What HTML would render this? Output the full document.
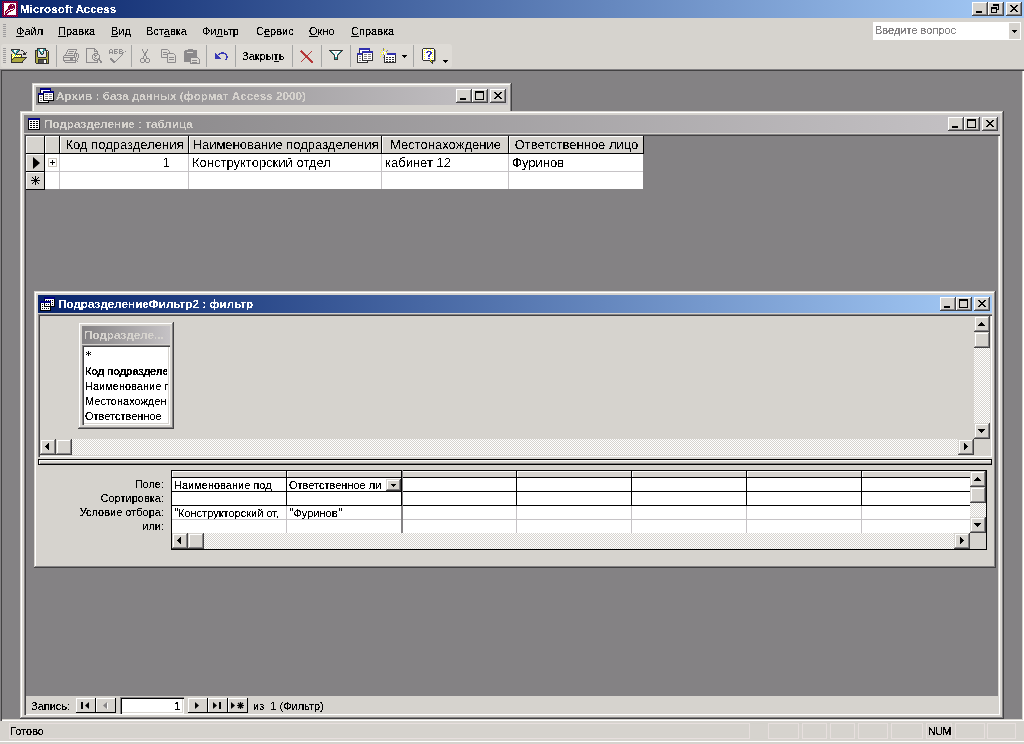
<!DOCTYPE html>
<html><head><meta charset="utf-8">
<style>
*{box-sizing:border-box}
body{margin:0;width:1024px;height:744px;position:relative;overflow:hidden;background:#D6D3CE;font-family:"Liberation Sans",sans-serif;font-size:11px;color:#000000}
.a{position:absolute}
.t{position:absolute;white-space:nowrap;line-height:12px;filter:url(#th)}
.dt{font-size:13px;line-height:15px;filter:url(#th5)}
u{text-decoration:underline;text-underline-offset:1px}
.frame{position:absolute;background:#D6D3CE;box-shadow:inset -1px -1px #424142,inset 1px 1px #D6D3CE,inset -2px -2px #848284,inset 2px 2px #FFFFFF}
.cb{position:absolute;width:16px;height:14px;background:#D6D3CE;box-shadow:inset -1px -1px #424142,inset 1px 1px #FFFFFF,inset -2px -2px #848284,inset 2px 2px #D6D3CE}
.sb{position:absolute;width:16px;height:16px;background:#D6D3CE;box-shadow:inset -1px -1px #424142,inset 1px 1px #D6D3CE,inset -2px -2px #848284,inset 2px 2px #FFFFFF}
.sunk{position:absolute;box-shadow:inset 1px 1px #848284,inset 2px 2px #424142,inset -1px -1px #FFFFFF,inset -2px -2px #D6D3CE}
.cap-act{position:absolute;height:18px;background:linear-gradient(to right,#08246B,#A5CBF7)}
.cap-in{position:absolute;height:18px;background:linear-gradient(to right,#848284,#C6C3C6)}
.capt{position:absolute;filter:url(#th5);font-weight:bold;font-size:11.7px;line-height:12px;white-space:nowrap}
.track{background-color:#FFFFFF;background-image:linear-gradient(45deg,#D6D3CE 25%,transparent 25%,transparent 75%,#D6D3CE 75%),linear-gradient(45deg,#D6D3CE 25%,transparent 25%,transparent 75%,#D6D3CE 75%);background-size:2px 2px;background-position:0 0,1px 1px}
svg{position:absolute;shape-rendering:crispEdges;overflow:visible}

</style></head><body>
<svg width="0" height="0" style="position:absolute"><filter id="th"><feComponentTransfer><feFuncA type="discrete" tableValues="0 0 0 0 1 1 1 1 1 1"/></feComponentTransfer></filter><filter id="th5"><feComponentTransfer><feFuncA type="discrete" tableValues="0 0 0 0 0 1 1 1 1 1"/></feComponentTransfer></filter></svg>
<div class="cap-act" style="left:0px;top:0px;width:1024px"></div>
<svg style="left:2px;top:1px" width="16" height="16"><rect x="0" y="0" width="1" height="1" fill="#840000"/><rect x="1" y="0" width="1" height="1" fill="#84007B"/><rect x="2" y="0" width="1" height="1" fill="#840000"/><rect x="3" y="0" width="1" height="1" fill="#84007B"/><rect x="4" y="0" width="1" height="1" fill="#840000"/><rect x="5" y="0" width="1" height="1" fill="#84007B"/><rect x="6" y="0" width="1" height="1" fill="#840000"/><rect x="7" y="0" width="1" height="1" fill="#84007B"/><rect x="8" y="0" width="1" height="1" fill="#840000"/><rect x="9" y="0" width="1" height="1" fill="#84007B"/><rect x="10" y="0" width="1" height="1" fill="#840000"/><rect x="11" y="0" width="1" height="1" fill="#84007B"/><rect x="12" y="0" width="1" height="1" fill="#840000"/><rect x="13" y="0" width="1" height="1" fill="#84007B"/><rect x="14" y="0" width="1" height="1" fill="#840000"/><rect x="15" y="0" width="1" height="1" fill="#84007B"/><rect x="0" y="1" width="1" height="1" fill="#84007B"/><rect x="1" y="1" width="1" height="1" fill="#840000"/><rect x="2" y="1" width="1" height="1" fill="#84007B"/><rect x="3" y="1" width="1" height="1" fill="#840000"/><rect x="4" y="1" width="1" height="1" fill="#84007B"/><rect x="5" y="1" width="1" height="1" fill="#840000"/><rect x="6" y="1" width="1" height="1" fill="#84007B"/><rect x="7" y="1" width="1" height="1" fill="#840000"/><rect x="8" y="1" width="1" height="1" fill="#84007B"/><rect x="9" y="1" width="1" height="1" fill="#840000"/><rect x="10" y="1" width="1" height="1" fill="#84007B"/><rect x="11" y="1" width="1" height="1" fill="#840000"/><rect x="12" y="1" width="1" height="1" fill="#84007B"/><rect x="13" y="1" width="1" height="1" fill="#840000"/><rect x="14" y="1" width="1" height="1" fill="#84007B"/><rect x="15" y="1" width="1" height="1" fill="#840000"/><rect x="0" y="2" width="1" height="1" fill="#840000"/><rect x="1" y="2" width="1" height="1" fill="#84007B"/><rect x="2" y="2" width="12" height="1" fill="#FFFFFF"/><rect x="14" y="2" width="1" height="1" fill="#840000"/><rect x="15" y="2" width="1" height="1" fill="#84007B"/><rect x="0" y="3" width="1" height="1" fill="#84007B"/><rect x="1" y="3" width="1" height="1" fill="#840000"/><rect x="2" y="3" width="6" height="1" fill="#FFFFFF"/><rect x="8" y="3" width="1" height="1" fill="#840000"/><rect x="9" y="3" width="1" height="1" fill="#84007B"/><rect x="10" y="3" width="1" height="1" fill="#840000"/><rect x="11" y="3" width="1" height="1" fill="#84007B"/><rect x="12" y="3" width="2" height="1" fill="#FFFFFF"/><rect x="14" y="3" width="1" height="1" fill="#84007B"/><rect x="15" y="3" width="1" height="1" fill="#840000"/><rect x="0" y="4" width="1" height="1" fill="#840000"/><rect x="1" y="4" width="1" height="1" fill="#84007B"/><rect x="2" y="4" width="5" height="1" fill="#FFFFFF"/><rect x="7" y="4" width="1" height="1" fill="#840000"/><rect x="8" y="4" width="1" height="1" fill="#84007B"/><rect x="9" y="4" width="1" height="1" fill="#840000"/><rect x="10" y="4" width="1" height="1" fill="#FFFFFF"/><rect x="11" y="4" width="1" height="1" fill="#840000"/><rect x="12" y="4" width="1" height="1" fill="#84007B"/><rect x="13" y="4" width="1" height="1" fill="#FFFFFF"/><rect x="14" y="4" width="1" height="1" fill="#840000"/><rect x="15" y="4" width="1" height="1" fill="#84007B"/><rect x="0" y="5" width="1" height="1" fill="#84007B"/><rect x="1" y="5" width="1" height="1" fill="#840000"/><rect x="2" y="5" width="4" height="1" fill="#FFFFFF"/><rect x="6" y="5" width="1" height="1" fill="#840000"/><rect x="7" y="5" width="1" height="1" fill="#84007B"/><rect x="8" y="5" width="1" height="1" fill="#840000"/><rect x="9" y="5" width="1" height="1" fill="#84007B"/><rect x="10" y="5" width="1" height="1" fill="#840000"/><rect x="11" y="5" width="1" height="1" fill="#84007B"/><rect x="12" y="5" width="1" height="1" fill="#840000"/><rect x="13" y="5" width="1" height="1" fill="#FFFFFF"/><rect x="14" y="5" width="1" height="1" fill="#84007B"/><rect x="15" y="5" width="1" height="1" fill="#840000"/><rect x="0" y="6" width="1" height="1" fill="#840000"/><rect x="1" y="6" width="1" height="1" fill="#84007B"/><rect x="2" y="6" width="4" height="1" fill="#FFFFFF"/><rect x="6" y="6" width="1" height="1" fill="#840000"/><rect x="7" y="6" width="1" height="1" fill="#84007B"/><rect x="8" y="6" width="1" height="1" fill="#840000"/><rect x="9" y="6" width="1" height="1" fill="#84007B"/><rect x="10" y="6" width="1" height="1" fill="#840000"/><rect x="11" y="6" width="1" height="1" fill="#84007B"/><rect x="12" y="6" width="1" height="1" fill="#840000"/><rect x="13" y="6" width="1" height="1" fill="#FFFFFF"/><rect x="14" y="6" width="1" height="1" fill="#840000"/><rect x="15" y="6" width="1" height="1" fill="#84007B"/><rect x="0" y="7" width="1" height="1" fill="#84007B"/><rect x="1" y="7" width="1" height="1" fill="#840000"/><rect x="2" y="7" width="4" height="1" fill="#FFFFFF"/><rect x="6" y="7" width="1" height="1" fill="#84007B"/><rect x="7" y="7" width="1" height="1" fill="#840000"/><rect x="8" y="7" width="1" height="1" fill="#84007B"/><rect x="9" y="7" width="1" height="1" fill="#840000"/><rect x="10" y="7" width="1" height="1" fill="#84007B"/><rect x="11" y="7" width="1" height="1" fill="#FFFFFF"/><rect x="12" y="7" width="1" height="1" fill="#84007B"/><rect x="13" y="7" width="1" height="1" fill="#FFFFFF"/><rect x="14" y="7" width="1" height="1" fill="#84007B"/><rect x="15" y="7" width="1" height="1" fill="#840000"/><rect x="0" y="8" width="1" height="1" fill="#840000"/><rect x="1" y="8" width="1" height="1" fill="#84007B"/><rect x="2" y="8" width="3" height="1" fill="#FFFFFF"/><rect x="5" y="8" width="1" height="1" fill="#840000"/><rect x="6" y="8" width="1" height="1" fill="#84007B"/><rect x="7" y="8" width="1" height="1" fill="#840000"/><rect x="8" y="8" width="3" height="1" fill="#FFFFFF"/><rect x="11" y="8" width="1" height="1" fill="#840000"/><rect x="12" y="8" width="2" height="1" fill="#FFFFFF"/><rect x="14" y="8" width="1" height="1" fill="#840000"/><rect x="15" y="8" width="1" height="1" fill="#84007B"/><rect x="0" y="9" width="1" height="1" fill="#84007B"/><rect x="1" y="9" width="1" height="1" fill="#840000"/><rect x="2" y="9" width="2" height="1" fill="#FFFFFF"/><rect x="4" y="9" width="1" height="1" fill="#840000"/><rect x="5" y="9" width="1" height="1" fill="#84007B"/><rect x="6" y="9" width="2" height="1" fill="#FFFFFF"/><rect x="8" y="9" width="1" height="1" fill="#840000"/><rect x="9" y="9" width="1" height="1" fill="#84007B"/><rect x="10" y="9" width="1" height="1" fill="#840000"/><rect x="11" y="9" width="3" height="1" fill="#FFFFFF"/><rect x="14" y="9" width="1" height="1" fill="#84007B"/><rect x="15" y="9" width="1" height="1" fill="#840000"/><rect x="0" y="10" width="1" height="1" fill="#840000"/><rect x="1" y="10" width="1" height="1" fill="#84007B"/><rect x="2" y="10" width="1" height="1" fill="#FFFFFF"/><rect x="3" y="10" width="1" height="1" fill="#840000"/><rect x="4" y="10" width="1" height="1" fill="#84007B"/><rect x="5" y="10" width="1" height="1" fill="#FFFFFF"/><rect x="6" y="10" width="1" height="1" fill="#840000"/><rect x="7" y="10" width="1" height="1" fill="#84007B"/><rect x="8" y="10" width="1" height="1" fill="#840000"/><rect x="9" y="10" width="5" height="1" fill="#FFFFFF"/><rect x="14" y="10" width="1" height="1" fill="#840000"/><rect x="15" y="10" width="1" height="1" fill="#84007B"/><rect x="0" y="11" width="1" height="1" fill="#84007B"/><rect x="1" y="11" width="1" height="1" fill="#840000"/><rect x="2" y="11" width="1" height="1" fill="#FFFFFF"/><rect x="3" y="11" width="1" height="1" fill="#840000"/><rect x="4" y="11" width="1" height="1" fill="#FFFFFF"/><rect x="5" y="11" width="1" height="1" fill="#840000"/><rect x="6" y="11" width="1" height="1" fill="#84007B"/><rect x="7" y="11" width="7" height="1" fill="#FFFFFF"/><rect x="14" y="11" width="1" height="1" fill="#84007B"/><rect x="15" y="11" width="1" height="1" fill="#840000"/><rect x="0" y="12" width="1" height="1" fill="#840000"/><rect x="1" y="12" width="1" height="1" fill="#84007B"/><rect x="2" y="12" width="1" height="1" fill="#FFFFFF"/><rect x="3" y="12" width="1" height="1" fill="#84007B"/><rect x="4" y="12" width="1" height="1" fill="#840000"/><rect x="5" y="12" width="1" height="1" fill="#84007B"/><rect x="6" y="12" width="8" height="1" fill="#FFFFFF"/><rect x="14" y="12" width="1" height="1" fill="#840000"/><rect x="15" y="12" width="1" height="1" fill="#84007B"/><rect x="0" y="13" width="1" height="1" fill="#84007B"/><rect x="1" y="13" width="1" height="1" fill="#840000"/><rect x="2" y="13" width="1" height="1" fill="#FFFFFF"/><rect x="3" y="13" width="1" height="1" fill="#840000"/><rect x="4" y="13" width="1" height="1" fill="#84007B"/><rect x="5" y="13" width="9" height="1" fill="#FFFFFF"/><rect x="14" y="13" width="1" height="1" fill="#84007B"/><rect x="15" y="13" width="1" height="1" fill="#840000"/><rect x="0" y="14" width="1" height="1" fill="#840000"/><rect x="1" y="14" width="1" height="1" fill="#84007B"/><rect x="2" y="14" width="1" height="1" fill="#840000"/><rect x="3" y="14" width="1" height="1" fill="#84007B"/><rect x="4" y="14" width="1" height="1" fill="#840000"/><rect x="5" y="14" width="1" height="1" fill="#84007B"/><rect x="6" y="14" width="1" height="1" fill="#840000"/><rect x="7" y="14" width="1" height="1" fill="#84007B"/><rect x="8" y="14" width="1" height="1" fill="#840000"/><rect x="9" y="14" width="1" height="1" fill="#84007B"/><rect x="10" y="14" width="1" height="1" fill="#840000"/><rect x="11" y="14" width="1" height="1" fill="#84007B"/><rect x="12" y="14" width="1" height="1" fill="#840000"/><rect x="13" y="14" width="1" height="1" fill="#84007B"/><rect x="14" y="14" width="1" height="1" fill="#840000"/><rect x="15" y="14" width="1" height="1" fill="#84007B"/><rect x="0" y="15" width="1" height="1" fill="#84007B"/><rect x="1" y="15" width="1" height="1" fill="#840000"/><rect x="2" y="15" width="1" height="1" fill="#84007B"/><rect x="3" y="15" width="1" height="1" fill="#840000"/><rect x="4" y="15" width="1" height="1" fill="#84007B"/><rect x="5" y="15" width="1" height="1" fill="#840000"/><rect x="6" y="15" width="1" height="1" fill="#84007B"/><rect x="7" y="15" width="1" height="1" fill="#840000"/><rect x="8" y="15" width="1" height="1" fill="#84007B"/><rect x="9" y="15" width="1" height="1" fill="#840000"/><rect x="10" y="15" width="1" height="1" fill="#84007B"/><rect x="11" y="15" width="1" height="1" fill="#840000"/><rect x="12" y="15" width="1" height="1" fill="#84007B"/><rect x="13" y="15" width="1" height="1" fill="#840000"/><rect x="14" y="15" width="1" height="1" fill="#84007B"/><rect x="15" y="15" width="1" height="1" fill="#840000"/></svg>
<div class="capt" style="left:20px;top:3px;color:#FFFFFF">Microsoft Access</div>
<div class="cb" style="left:972px;top:2px"><svg style="left:0;top:0" width="16" height="14"><rect x="4" y="9" width="6" height="2" fill="#000000"/></svg></div>
<div class="cb" style="left:988px;top:2px"><svg style="left:0;top:0" width="16" height="14"><rect x="5" y="2" width="6" height="2" fill="#000000"/><rect x="10" y="2" width="1" height="6" fill="#000000"/><rect x="9" y="7" width="2" height="1" fill="#000000"/><rect x="3" y="5" width="6" height="2" fill="#000000"/><rect x="3" y="5" width="1" height="6" fill="#000000"/><rect x="8" y="5" width="1" height="6" fill="#000000"/><rect x="3" y="10" width="6" height="1" fill="#000000"/></svg></div>
<div class="cb" style="left:1006px;top:2px"><svg style="left:0;top:0" width="16" height="14"><rect x="4" y="3" width="1" height="1" fill="#000000"/><rect x="5" y="3" width="1" height="1" fill="#000000"/><rect x="10" y="3" width="1" height="1" fill="#000000"/><rect x="11" y="3" width="1" height="1" fill="#000000"/><rect x="5" y="4" width="1" height="1" fill="#000000"/><rect x="6" y="4" width="1" height="1" fill="#000000"/><rect x="9" y="4" width="1" height="1" fill="#000000"/><rect x="10" y="4" width="1" height="1" fill="#000000"/><rect x="6" y="5" width="1" height="1" fill="#000000"/><rect x="7" y="5" width="1" height="1" fill="#000000"/><rect x="8" y="5" width="1" height="1" fill="#000000"/><rect x="9" y="5" width="1" height="1" fill="#000000"/><rect x="7" y="6" width="1" height="1" fill="#000000"/><rect x="8" y="6" width="1" height="1" fill="#000000"/><rect x="6" y="7" width="1" height="1" fill="#000000"/><rect x="7" y="7" width="1" height="1" fill="#000000"/><rect x="8" y="7" width="1" height="1" fill="#000000"/><rect x="9" y="7" width="1" height="1" fill="#000000"/><rect x="5" y="8" width="1" height="1" fill="#000000"/><rect x="6" y="8" width="1" height="1" fill="#000000"/><rect x="9" y="8" width="1" height="1" fill="#000000"/><rect x="10" y="8" width="1" height="1" fill="#000000"/><rect x="4" y="9" width="1" height="1" fill="#000000"/><rect x="5" y="9" width="1" height="1" fill="#000000"/><rect x="10" y="9" width="1" height="1" fill="#000000"/><rect x="11" y="9" width="1" height="1" fill="#000000"/></svg></div>
<div class="a" style="left:3px;top:24px;width:3px;height:1px;background:#9C9A9C;"></div>
<div class="a" style="left:3px;top:26px;width:3px;height:1px;background:#9C9A9C;"></div>
<div class="a" style="left:3px;top:28px;width:3px;height:1px;background:#9C9A9C;"></div>
<div class="a" style="left:3px;top:30px;width:3px;height:1px;background:#9C9A9C;"></div>
<div class="a" style="left:3px;top:32px;width:3px;height:1px;background:#9C9A9C;"></div>
<div class="a" style="left:3px;top:34px;width:3px;height:1px;background:#9C9A9C;"></div>
<div class="a" style="left:3px;top:36px;width:3px;height:1px;background:#9C9A9C;"></div>
<div class="t" style="left:16px;top:25px;"><u>Ф</u>айл</div>
<div class="t" style="left:58px;top:25px;"><u>П</u>равка</div>
<div class="t" style="left:111px;top:25px;"><u>В</u>ид</div>
<div class="t" style="left:146px;top:25px;">Вст<u>а</u>вка</div>
<div class="t" style="left:202px;top:25px;">Фи<u>л</u>ьтр</div>
<div class="t" style="left:256px;top:25px;">С<u>е</u>рвис</div>
<div class="t" style="left:309px;top:25px;"><u>О</u>кно</div>
<div class="t" style="left:351px;top:25px;"><u>С</u>правка</div>
<div class="a" style="left:873px;top:22px;width:148px;height:18px;background:#FFFFFF;"></div>
<div class="t" style="left:875px;top:24px;color:#848284">Введите вопрос</div>
<div class="a" style="left:1009px;top:23px;width:11px;height:16px;background:#D6D3CE;"></div>
<svg style="left:1012px;top:30px" width="5" height="3"><rect x="0" y="0" width="5" height="1" fill="#000000"/><rect x="1" y="1" width="3" height="1" fill="#000000"/><rect x="2" y="2" width="1" height="1" fill="#000000"/></svg>
<div class="a" style="left:1px;top:44px;width:451px;height:24px;background:#DEDBD6;border-radius:3px"></div>
<div class="a" style="left:3px;top:48px;width:3px;height:1px;background:#9C9A9C;"></div>
<div class="a" style="left:3px;top:50px;width:3px;height:1px;background:#9C9A9C;"></div>
<div class="a" style="left:3px;top:52px;width:3px;height:1px;background:#9C9A9C;"></div>
<div class="a" style="left:3px;top:54px;width:3px;height:1px;background:#9C9A9C;"></div>
<div class="a" style="left:3px;top:56px;width:3px;height:1px;background:#9C9A9C;"></div>
<div class="a" style="left:3px;top:58px;width:3px;height:1px;background:#9C9A9C;"></div>
<div class="a" style="left:3px;top:60px;width:3px;height:1px;background:#9C9A9C;"></div>
<div class="a" style="left:3px;top:62px;width:3px;height:1px;background:#9C9A9C;"></div>
<div class="a" style="left:56px;top:45px;width:1px;height:22px;background:#A5A6A5;"></div>
<div class="a" style="left:131px;top:45px;width:1px;height:22px;background:#A5A6A5;"></div>
<div class="a" style="left:206px;top:45px;width:1px;height:22px;background:#A5A6A5;"></div>
<div class="a" style="left:235px;top:45px;width:1px;height:22px;background:#A5A6A5;"></div>
<div class="a" style="left:292px;top:45px;width:1px;height:22px;background:#A5A6A5;"></div>
<div class="a" style="left:321px;top:45px;width:1px;height:22px;background:#A5A6A5;"></div>
<div class="a" style="left:350px;top:45px;width:1px;height:22px;background:#A5A6A5;"></div>
<div class="a" style="left:413px;top:45px;width:1px;height:22px;background:#A5A6A5;"></div>
<svg style="left:10px;top:47px" width="18" height="16"><rect x="1" y="2" width="9" height="1" fill="#313031"/><rect x="1" y="3" width="1" height="1" fill="#313031"/><rect x="2" y="3" width="2" height="1" fill="#31A2A5"/><rect x="4" y="3" width="3" height="1" fill="#FFFFFF"/><rect x="7" y="3" width="2" height="1" fill="#31A2A5"/><rect x="9" y="3" width="1" height="1" fill="#313031"/><rect x="11" y="3" width="2" height="1" fill="#313031"/><rect x="2" y="4" width="1" height="1" fill="#313031"/><rect x="3" y="4" width="1" height="1" fill="#31A2A5"/><rect x="4" y="4" width="2" height="1" fill="#FFFFFF"/><rect x="6" y="4" width="2" height="1" fill="#31A2A5"/><rect x="8" y="4" width="1" height="1" fill="#313031"/><rect x="13" y="4" width="1" height="1" fill="#313031"/><rect x="3" y="5" width="1" height="1" fill="#313031"/><rect x="4" y="5" width="1" height="1" fill="#31A2A5"/><rect x="5" y="5" width="1" height="1" fill="#FFFFFF"/><rect x="6" y="5" width="1" height="1" fill="#31A2A5"/><rect x="7" y="5" width="1" height="1" fill="#313031"/><rect x="14" y="5" width="1" height="1" fill="#313031"/><rect x="16" y="5" width="1" height="1" fill="#313031"/><rect x="4" y="6" width="1" height="1" fill="#313031"/><rect x="5" y="6" width="1" height="1" fill="#31A2A5"/><rect x="6" y="6" width="1" height="1" fill="#313031"/><rect x="13" y="6" width="3" height="1" fill="#313031"/><rect x="1" y="7" width="1" height="1" fill="#313031"/><rect x="2" y="7" width="1" height="1" fill="#FFFF00"/><rect x="3" y="7" width="1" height="1" fill="#FFFFFF"/><rect x="4" y="7" width="1" height="1" fill="#FFFF00"/><rect x="5" y="7" width="1" height="1" fill="#31A2A5"/><rect x="6" y="7" width="6" height="1" fill="#313031"/><rect x="13" y="7" width="3" height="1" fill="#313031"/><rect x="1" y="8" width="1" height="1" fill="#313031"/><rect x="2" y="8" width="1" height="1" fill="#FFFFFF"/><rect x="3" y="8" width="1" height="1" fill="#FFFF00"/><rect x="4" y="8" width="1" height="1" fill="#FFFFFF"/><rect x="5" y="8" width="1" height="1" fill="#31A2A5"/><rect x="6" y="8" width="1" height="1" fill="#FFFFFF"/><rect x="7" y="8" width="1" height="1" fill="#FFFF00"/><rect x="8" y="8" width="1" height="1" fill="#FFFFFF"/><rect x="9" y="8" width="1" height="1" fill="#FFFF00"/><rect x="10" y="8" width="1" height="1" fill="#FFFFFF"/><rect x="11" y="8" width="1" height="1" fill="#313031"/><rect x="1" y="9" width="1" height="1" fill="#313031"/><rect x="2" y="9" width="1" height="1" fill="#FFFF00"/><rect x="3" y="9" width="1" height="1" fill="#FFFFFF"/><rect x="4" y="9" width="1" height="1" fill="#FFFF00"/><rect x="5" y="9" width="1" height="1" fill="#FFFFFF"/><rect x="6" y="9" width="1" height="1" fill="#FFFF00"/><rect x="7" y="9" width="1" height="1" fill="#FFFFFF"/><rect x="8" y="9" width="1" height="1" fill="#FFFF00"/><rect x="9" y="9" width="1" height="1" fill="#FFFFFF"/><rect x="10" y="9" width="1" height="1" fill="#FFFF00"/><rect x="11" y="9" width="1" height="1" fill="#313031"/><rect x="1" y="10" width="1" height="1" fill="#313031"/><rect x="2" y="10" width="1" height="1" fill="#FFFFFF"/><rect x="3" y="10" width="1" height="1" fill="#FFFF00"/><rect x="4" y="10" width="13" height="1" fill="#313031"/><rect x="1" y="11" width="1" height="1" fill="#313031"/><rect x="2" y="11" width="1" height="1" fill="#FFFF00"/><rect x="3" y="11" width="1" height="1" fill="#313031"/><rect x="4" y="11" width="11" height="1" fill="#ADAA42"/><rect x="15" y="11" width="1" height="1" fill="#313031"/><rect x="1" y="12" width="2" height="1" fill="#313031"/><rect x="3" y="12" width="11" height="1" fill="#ADAA42"/><rect x="14" y="12" width="1" height="1" fill="#313031"/><rect x="1" y="13" width="1" height="1" fill="#313031"/><rect x="2" y="13" width="11" height="1" fill="#ADAA42"/><rect x="13" y="13" width="1" height="1" fill="#313031"/><rect x="1" y="14" width="1" height="1" fill="#313031"/><rect x="2" y="14" width="10" height="1" fill="#ADAA42"/><rect x="12" y="14" width="1" height="1" fill="#313031"/><rect x="1" y="15" width="12" height="1" fill="#313031"/></svg>
<svg style="left:33px;top:47px" width="16" height="17"><rect x="4" y="1" width="9" height="1" fill="#313031"/><rect x="4" y="2" width="1" height="1" fill="#313031"/><rect x="5" y="2" width="2" height="1" fill="#31A2A5"/><rect x="7" y="2" width="3" height="1" fill="#FFFFFF"/><rect x="10" y="2" width="2" height="1" fill="#31A2A5"/><rect x="12" y="2" width="1" height="1" fill="#313031"/><rect x="2" y="3" width="3" height="1" fill="#313031"/><rect x="5" y="3" width="2" height="1" fill="#31A2A5"/><rect x="7" y="3" width="3" height="1" fill="#FFFFFF"/><rect x="10" y="3" width="2" height="1" fill="#31A2A5"/><rect x="12" y="3" width="3" height="1" fill="#313031"/><rect x="2" y="4" width="1" height="1" fill="#313031"/><rect x="3" y="4" width="1" height="1" fill="#ADAA42"/><rect x="4" y="4" width="1" height="1" fill="#313031"/><rect x="5" y="4" width="1" height="1" fill="#E7E3E7"/><rect x="6" y="4" width="1" height="1" fill="#313031"/><rect x="7" y="4" width="1" height="1" fill="#31A2A5"/><rect x="8" y="4" width="1" height="1" fill="#FFFFFF"/><rect x="9" y="4" width="1" height="1" fill="#31A2A5"/><rect x="10" y="4" width="1" height="1" fill="#313031"/><rect x="11" y="4" width="2" height="1" fill="#E7E3E7"/><rect x="13" y="4" width="1" height="1" fill="#313031"/><rect x="14" y="4" width="1" height="1" fill="#FFFFFF"/><rect x="15" y="4" width="1" height="1" fill="#313031"/><rect x="2" y="5" width="1" height="1" fill="#313031"/><rect x="3" y="5" width="1" height="1" fill="#ADAA42"/><rect x="4" y="5" width="1" height="1" fill="#313031"/><rect x="5" y="5" width="2" height="1" fill="#E7E3E7"/><rect x="7" y="5" width="1" height="1" fill="#313031"/><rect x="8" y="5" width="1" height="1" fill="#31A2A5"/><rect x="9" y="5" width="1" height="1" fill="#FFFFFF"/><rect x="10" y="5" width="1" height="1" fill="#313031"/><rect x="11" y="5" width="2" height="1" fill="#E7E3E7"/><rect x="13" y="5" width="1" height="1" fill="#313031"/><rect x="14" y="5" width="1" height="1" fill="#ADAA42"/><rect x="15" y="5" width="1" height="1" fill="#313031"/><rect x="2" y="6" width="1" height="1" fill="#313031"/><rect x="3" y="6" width="1" height="1" fill="#ADAA42"/><rect x="4" y="6" width="1" height="1" fill="#313031"/><rect x="5" y="6" width="2" height="1" fill="#E7E3E7"/><rect x="7" y="6" width="1" height="1" fill="#313031"/><rect x="8" y="6" width="2" height="1" fill="#31A2A5"/><rect x="10" y="6" width="1" height="1" fill="#313031"/><rect x="11" y="6" width="2" height="1" fill="#E7E3E7"/><rect x="13" y="6" width="1" height="1" fill="#313031"/><rect x="14" y="6" width="1" height="1" fill="#ADAA42"/><rect x="15" y="6" width="1" height="1" fill="#313031"/><rect x="2" y="7" width="1" height="1" fill="#313031"/><rect x="3" y="7" width="1" height="1" fill="#ADAA42"/><rect x="4" y="7" width="1" height="1" fill="#313031"/><rect x="5" y="7" width="3" height="1" fill="#E7E3E7"/><rect x="8" y="7" width="2" height="1" fill="#313031"/><rect x="10" y="7" width="3" height="1" fill="#E7E3E7"/><rect x="13" y="7" width="1" height="1" fill="#313031"/><rect x="14" y="7" width="1" height="1" fill="#ADAA42"/><rect x="15" y="7" width="1" height="1" fill="#313031"/><rect x="2" y="8" width="1" height="1" fill="#313031"/><rect x="3" y="8" width="1" height="1" fill="#ADAA42"/><rect x="4" y="8" width="1" height="1" fill="#313031"/><rect x="5" y="8" width="8" height="1" fill="#E7E3E7"/><rect x="13" y="8" width="1" height="1" fill="#313031"/><rect x="14" y="8" width="1" height="1" fill="#ADAA42"/><rect x="15" y="8" width="1" height="1" fill="#313031"/><rect x="2" y="9" width="1" height="1" fill="#313031"/><rect x="3" y="9" width="1" height="1" fill="#ADAA42"/><rect x="4" y="9" width="1" height="1" fill="#313031"/><rect x="5" y="9" width="8" height="1" fill="#E7E3E7"/><rect x="13" y="9" width="1" height="1" fill="#313031"/><rect x="14" y="9" width="1" height="1" fill="#ADAA42"/><rect x="15" y="9" width="1" height="1" fill="#313031"/><rect x="2" y="10" width="1" height="1" fill="#313031"/><rect x="3" y="10" width="2" height="1" fill="#ADAA42"/><rect x="5" y="10" width="8" height="1" fill="#313031"/><rect x="13" y="10" width="2" height="1" fill="#ADAA42"/><rect x="15" y="10" width="1" height="1" fill="#313031"/><rect x="2" y="11" width="1" height="1" fill="#313031"/><rect x="3" y="11" width="12" height="1" fill="#ADAA42"/><rect x="15" y="11" width="1" height="1" fill="#313031"/><rect x="2" y="12" width="1" height="1" fill="#313031"/><rect x="3" y="12" width="2" height="1" fill="#ADAA42"/><rect x="5" y="12" width="9" height="1" fill="#313031"/><rect x="14" y="12" width="1" height="1" fill="#ADAA42"/><rect x="15" y="12" width="1" height="1" fill="#313031"/><rect x="2" y="13" width="1" height="1" fill="#313031"/><rect x="3" y="13" width="2" height="1" fill="#ADAA42"/><rect x="5" y="13" width="1" height="1" fill="#313031"/><rect x="6" y="13" width="5" height="1" fill="#525152"/><rect x="11" y="13" width="2" height="1" fill="#FFFFFF"/><rect x="13" y="13" width="1" height="1" fill="#313031"/><rect x="14" y="13" width="1" height="1" fill="#ADAA42"/><rect x="15" y="13" width="1" height="1" fill="#313031"/><rect x="2" y="14" width="1" height="1" fill="#313031"/><rect x="3" y="14" width="2" height="1" fill="#ADAA42"/><rect x="5" y="14" width="1" height="1" fill="#313031"/><rect x="6" y="14" width="5" height="1" fill="#525152"/><rect x="11" y="14" width="2" height="1" fill="#FFFFFF"/><rect x="13" y="14" width="1" height="1" fill="#313031"/><rect x="14" y="14" width="1" height="1" fill="#ADAA42"/><rect x="15" y="14" width="1" height="1" fill="#313031"/><rect x="2" y="15" width="1" height="1" fill="#313031"/><rect x="3" y="15" width="2" height="1" fill="#ADAA42"/><rect x="5" y="15" width="1" height="1" fill="#313031"/><rect x="6" y="15" width="5" height="1" fill="#525152"/><rect x="11" y="15" width="2" height="1" fill="#FFFFFF"/><rect x="13" y="15" width="1" height="1" fill="#313031"/><rect x="14" y="15" width="1" height="1" fill="#ADAA42"/><rect x="15" y="15" width="1" height="1" fill="#313031"/><rect x="3" y="16" width="13" height="1" fill="#313031"/></svg>
<svg style="left:62px;top:47px" width="18" height="16"><rect x="6" y="2" width="9" height="1" fill="#8C8A8C"/><rect x="5" y="3" width="1" height="1" fill="#8C8A8C"/><rect x="14" y="3" width="1" height="1" fill="#8C8A8C"/><rect x="5" y="4" width="1" height="1" fill="#8C8A8C"/><rect x="7" y="4" width="5" height="1" fill="#8C8A8C"/><rect x="13" y="4" width="1" height="1" fill="#8C8A8C"/><rect x="4" y="5" width="1" height="1" fill="#8C8A8C"/><rect x="13" y="5" width="1" height="1" fill="#8C8A8C"/><rect x="4" y="6" width="1" height="1" fill="#8C8A8C"/><rect x="6" y="6" width="5" height="1" fill="#8C8A8C"/><rect x="12" y="6" width="4" height="1" fill="#8C8A8C"/><rect x="3" y="7" width="1" height="1" fill="#8C8A8C"/><rect x="12" y="7" width="1" height="1" fill="#8C8A8C"/><rect x="14" y="7" width="1" height="1" fill="#8C8A8C"/><rect x="16" y="7" width="1" height="1" fill="#8C8A8C"/><rect x="2" y="8" width="11" height="1" fill="#8C8A8C"/><rect x="14" y="8" width="1" height="1" fill="#8C8A8C"/><rect x="16" y="8" width="1" height="1" fill="#8C8A8C"/><rect x="1" y="9" width="1" height="1" fill="#8C8A8C"/><rect x="12" y="9" width="1" height="1" fill="#8C8A8C"/><rect x="14" y="9" width="1" height="1" fill="#8C8A8C"/><rect x="16" y="9" width="1" height="1" fill="#8C8A8C"/><rect x="1" y="10" width="13" height="1" fill="#8C8A8C"/><rect x="16" y="10" width="1" height="1" fill="#8C8A8C"/><rect x="1" y="11" width="1" height="1" fill="#8C8A8C"/><rect x="8" y="11" width="3" height="1" fill="#8C8A8C"/><rect x="13" y="11" width="1" height="1" fill="#8C8A8C"/><rect x="15" y="11" width="1" height="1" fill="#8C8A8C"/><rect x="1" y="12" width="1" height="1" fill="#8C8A8C"/><rect x="8" y="12" width="3" height="1" fill="#8C8A8C"/><rect x="13" y="12" width="1" height="1" fill="#8C8A8C"/><rect x="15" y="12" width="1" height="1" fill="#8C8A8C"/><rect x="1" y="13" width="14" height="1" fill="#8C8A8C"/><rect x="2" y="14" width="1" height="1" fill="#8C8A8C"/><rect x="13" y="14" width="1" height="1" fill="#8C8A8C"/><rect x="15" y="14" width="1" height="1" fill="#8C8A8C"/><rect x="3" y="15" width="11" height="1" fill="#8C8A8C"/></svg>
<svg style="left:85px;top:47px" width="18" height="16"><rect x="1" y="1" width="9" height="1" fill="#8C8A8C"/><rect x="1" y="2" width="1" height="1" fill="#8C8A8C"/><rect x="9" y="2" width="2" height="1" fill="#8C8A8C"/><rect x="1" y="3" width="1" height="1" fill="#8C8A8C"/><rect x="9" y="3" width="1" height="1" fill="#8C8A8C"/><rect x="11" y="3" width="1" height="1" fill="#8C8A8C"/><rect x="1" y="4" width="1" height="1" fill="#8C8A8C"/><rect x="9" y="4" width="4" height="1" fill="#8C8A8C"/><rect x="1" y="5" width="1" height="1" fill="#8C8A8C"/><rect x="12" y="5" width="1" height="1" fill="#8C8A8C"/><rect x="1" y="6" width="1" height="1" fill="#8C8A8C"/><rect x="9" y="6" width="4" height="1" fill="#8C8A8C"/><rect x="1" y="7" width="1" height="1" fill="#8C8A8C"/><rect x="8" y="7" width="2" height="1" fill="#8C8A8C"/><rect x="12" y="7" width="2" height="1" fill="#8C8A8C"/><rect x="1" y="8" width="1" height="1" fill="#8C8A8C"/><rect x="7" y="8" width="1" height="1" fill="#8C8A8C"/><rect x="9" y="8" width="3" height="1" fill="#8C8A8C"/><rect x="14" y="8" width="1" height="1" fill="#8C8A8C"/><rect x="1" y="9" width="1" height="1" fill="#8C8A8C"/><rect x="7" y="9" width="1" height="1" fill="#8C8A8C"/><rect x="10" y="9" width="1" height="1" fill="#8C8A8C"/><rect x="14" y="9" width="1" height="1" fill="#8C8A8C"/><rect x="1" y="10" width="1" height="1" fill="#8C8A8C"/><rect x="7" y="10" width="1" height="1" fill="#8C8A8C"/><rect x="9" y="10" width="1" height="1" fill="#8C8A8C"/><rect x="14" y="10" width="1" height="1" fill="#8C8A8C"/><rect x="1" y="11" width="1" height="1" fill="#8C8A8C"/><rect x="7" y="11" width="1" height="1" fill="#8C8A8C"/><rect x="10" y="11" width="2" height="1" fill="#8C8A8C"/><rect x="13" y="11" width="2" height="1" fill="#8C8A8C"/><rect x="1" y="12" width="1" height="1" fill="#8C8A8C"/><rect x="8" y="12" width="2" height="1" fill="#8C8A8C"/><rect x="12" y="12" width="3" height="1" fill="#8C8A8C"/><rect x="1" y="13" width="1" height="1" fill="#8C8A8C"/><rect x="9" y="13" width="4" height="1" fill="#8C8A8C"/><rect x="14" y="13" width="2" height="1" fill="#8C8A8C"/><rect x="1" y="14" width="1" height="1" fill="#8C8A8C"/><rect x="12" y="14" width="1" height="1" fill="#8C8A8C"/><rect x="15" y="14" width="2" height="1" fill="#8C8A8C"/><rect x="1" y="15" width="12" height="1" fill="#8C8A8C"/><rect x="15" y="15" width="2" height="1" fill="#8C8A8C"/></svg>
<svg style="left:108px;top:47px" width="18" height="16"><rect x="2" y="2" width="2" height="1" fill="#8C8A8C"/><rect x="6" y="2" width="4" height="1" fill="#8C8A8C"/><rect x="11" y="2" width="3" height="1" fill="#8C8A8C"/><rect x="1" y="3" width="1" height="1" fill="#8C8A8C"/><rect x="4" y="3" width="1" height="1" fill="#8C8A8C"/><rect x="6" y="3" width="1" height="1" fill="#8C8A8C"/><rect x="11" y="3" width="1" height="1" fill="#8C8A8C"/><rect x="14" y="3" width="1" height="1" fill="#8C8A8C"/><rect x="1" y="4" width="1" height="1" fill="#8C8A8C"/><rect x="4" y="4" width="1" height="1" fill="#8C8A8C"/><rect x="6" y="4" width="3" height="1" fill="#8C8A8C"/><rect x="11" y="4" width="3" height="1" fill="#8C8A8C"/><rect x="17" y="4" width="1" height="1" fill="#8C8A8C"/><rect x="1" y="5" width="4" height="1" fill="#8C8A8C"/><rect x="6" y="5" width="1" height="1" fill="#8C8A8C"/><rect x="9" y="5" width="1" height="1" fill="#8C8A8C"/><rect x="11" y="5" width="1" height="1" fill="#8C8A8C"/><rect x="14" y="5" width="2" height="1" fill="#8C8A8C"/><rect x="1" y="6" width="1" height="1" fill="#8C8A8C"/><rect x="4" y="6" width="1" height="1" fill="#8C8A8C"/><rect x="6" y="6" width="3" height="1" fill="#8C8A8C"/><rect x="11" y="6" width="4" height="1" fill="#8C8A8C"/><rect x="14" y="7" width="1" height="1" fill="#8C8A8C"/><rect x="13" y="8" width="1" height="1" fill="#8C8A8C"/><rect x="12" y="9" width="1" height="1" fill="#8C8A8C"/><rect x="11" y="10" width="1" height="1" fill="#8C8A8C"/><rect x="2" y="11" width="2" height="1" fill="#8C8A8C"/><rect x="10" y="11" width="1" height="1" fill="#8C8A8C"/><rect x="2" y="12" width="3" height="1" fill="#8C8A8C"/><rect x="9" y="12" width="1" height="1" fill="#8C8A8C"/><rect x="3" y="13" width="3" height="1" fill="#8C8A8C"/><rect x="8" y="13" width="1" height="1" fill="#8C8A8C"/><rect x="4" y="14" width="4" height="1" fill="#8C8A8C"/><rect x="5" y="15" width="2" height="1" fill="#8C8A8C"/></svg>
<svg style="left:140px;top:49px" width="11" height="15" shape-rendering="auto"><path d="M2 0l5 9 M8 0l-5 9" stroke="#8C8A8C" fill="none"/><ellipse cx="2.5" cy="11.5" rx="1.8" ry="2.2" fill="none" stroke="#8C8A8C"/><ellipse cx="7.5" cy="11.5" rx="1.8" ry="2.2" fill="none" stroke="#8C8A8C"/></svg>
<svg style="left:161px;top:49px" width="16" height="14"><path d="M0.5 0.5h6l2 2v6h-8z" fill="none" stroke="#8C8A8C" shape-rendering="auto"/><rect x="2" y="3" width="4" height="1" fill="#8C8A8C"/><rect x="2" y="5" width="4" height="1" fill="#8C8A8C"/><path d="M6.5 4.5h6l2 2v7h-8z" fill="#DEDBD6" stroke="#8C8A8C" shape-rendering="auto"/><rect x="8" y="8" width="5" height="1" fill="#8C8A8C"/><rect x="8" y="10" width="5" height="1" fill="#8C8A8C"/></svg>
<svg style="left:184px;top:49px" width="17" height="15" shape-rendering="auto"><rect x="0" y="1" width="13" height="12" rx="2" fill="#8C8A8C"/><rect x="4" y="0" width="5" height="2" fill="#8C8A8C"/><rect x="3" y="3" width="6" height="1" fill="#DEDBD6"/><path d="M6.5 8.5h7l2 2v4h-9z" fill="#DEDBD6" stroke="#8C8A8C"/><path d="M8 11h5 M8 13h5" stroke="#8C8A8C"/></svg>
<svg style="left:214px;top:51px" width="15" height="10" shape-rendering="auto"><path d="M4 4 C6 1.5 11 1 12.5 4 C13.5 6 12.5 8 11 9" fill="none" stroke="#3938B5" stroke-width="1.4"/><path d="M1 2v6h6z" fill="#3938B5"/></svg>
<div class="t" style="left:242px;top:50px;">Закры<u>т</u>ь</div>
<svg style="left:300px;top:50px" width="15" height="14" shape-rendering="auto"><path d="M1 1l12 12" stroke="#B53839" stroke-width="1.8"/><path d="M12 1l-11 11" stroke="#B53839" stroke-width="1.3"/></svg>
<svg style="left:329px;top:50px" width="14" height="10"><rect x="0" y="0" width="14" height="1" fill="#313031"/><rect x="1" y="1" width="1" height="1" fill="#313031"/><rect x="2" y="1" width="1" height="1" fill="#31A2A5"/><rect x="3" y="1" width="8" height="1" fill="#FFFFFF"/><rect x="11" y="1" width="1" height="1" fill="#31A2A5"/><rect x="12" y="1" width="1" height="1" fill="#313031"/><rect x="2" y="2" width="1" height="1" fill="#313031"/><rect x="3" y="2" width="1" height="1" fill="#31A2A5"/><rect x="4" y="2" width="2" height="1" fill="#FFFFFF"/><rect x="6" y="2" width="2" height="1" fill="#DED3DE"/><rect x="8" y="2" width="2" height="1" fill="#FFFFFF"/><rect x="10" y="2" width="1" height="1" fill="#31A2A5"/><rect x="11" y="2" width="1" height="1" fill="#313031"/><rect x="3" y="3" width="1" height="1" fill="#313031"/><rect x="4" y="3" width="1" height="1" fill="#31A2A5"/><rect x="5" y="3" width="1" height="1" fill="#FFFFFF"/><rect x="6" y="3" width="2" height="1" fill="#DED3DE"/><rect x="8" y="3" width="1" height="1" fill="#FFFFFF"/><rect x="9" y="3" width="1" height="1" fill="#31A2A5"/><rect x="10" y="3" width="1" height="1" fill="#313031"/><rect x="4" y="4" width="1" height="1" fill="#313031"/><rect x="5" y="4" width="1" height="1" fill="#31A2A5"/><rect x="6" y="4" width="2" height="1" fill="#FFFFFF"/><rect x="8" y="4" width="1" height="1" fill="#31A2A5"/><rect x="9" y="4" width="1" height="1" fill="#313031"/><rect x="5" y="5" width="1" height="1" fill="#313031"/><rect x="6" y="5" width="2" height="1" fill="#FFFFFF"/><rect x="8" y="5" width="1" height="1" fill="#313031"/><rect x="5" y="6" width="1" height="1" fill="#313031"/><rect x="6" y="6" width="2" height="1" fill="#FFFFFF"/><rect x="8" y="6" width="1" height="1" fill="#313031"/><rect x="5" y="7" width="1" height="1" fill="#313031"/><rect x="6" y="7" width="2" height="1" fill="#31A2A5"/><rect x="8" y="7" width="1" height="1" fill="#313031"/><rect x="5" y="8" width="1" height="1" fill="#313031"/><rect x="6" y="8" width="2" height="1" fill="#31A2A5"/><rect x="8" y="8" width="1" height="1" fill="#313031"/><rect x="5" y="9" width="4" height="1" fill="#313031"/></svg>
<svg style="left:356px;top:47px" width="18" height="16"><rect x="3" y="1" width="11" height="1" fill="#3130AD"/><rect x="3" y="2" width="11" height="1" fill="#3130AD"/><rect x="3" y="3" width="1" height="1" fill="#313031"/><rect x="4" y="3" width="9" height="1" fill="#FFFFFF"/><rect x="13" y="3" width="1" height="1" fill="#313031"/><rect x="3" y="4" width="1" height="1" fill="#313031"/><rect x="4" y="4" width="2" height="1" fill="#FFFFFF"/><rect x="6" y="4" width="11" height="1" fill="#3130AD"/><rect x="3" y="5" width="1" height="1" fill="#313031"/><rect x="4" y="5" width="2" height="1" fill="#FFFFFF"/><rect x="6" y="5" width="11" height="1" fill="#3130AD"/><rect x="1" y="6" width="5" height="1" fill="#3130AD"/><rect x="6" y="6" width="1" height="1" fill="#313031"/><rect x="7" y="6" width="9" height="1" fill="#FFFFFF"/><rect x="16" y="6" width="1" height="1" fill="#313031"/><rect x="1" y="7" width="5" height="1" fill="#3130AD"/><rect x="6" y="7" width="1" height="1" fill="#313031"/><rect x="7" y="7" width="1" height="1" fill="#FFFFFF"/><rect x="8" y="7" width="3" height="1" fill="#848284"/><rect x="11" y="7" width="1" height="1" fill="#FFFFFF"/><rect x="12" y="7" width="3" height="1" fill="#848284"/><rect x="15" y="7" width="1" height="1" fill="#FFFFFF"/><rect x="16" y="7" width="1" height="1" fill="#313031"/><rect x="1" y="8" width="1" height="1" fill="#313031"/><rect x="2" y="8" width="4" height="1" fill="#FFFFFF"/><rect x="6" y="8" width="1" height="1" fill="#313031"/><rect x="7" y="8" width="9" height="1" fill="#FFFFFF"/><rect x="16" y="8" width="1" height="1" fill="#313031"/><rect x="1" y="9" width="1" height="1" fill="#313031"/><rect x="2" y="9" width="1" height="1" fill="#FFFFFF"/><rect x="3" y="9" width="2" height="1" fill="#848284"/><rect x="5" y="9" width="1" height="1" fill="#FFFFFF"/><rect x="6" y="9" width="1" height="1" fill="#313031"/><rect x="7" y="9" width="1" height="1" fill="#FFFFFF"/><rect x="8" y="9" width="3" height="1" fill="#848284"/><rect x="11" y="9" width="1" height="1" fill="#FFFFFF"/><rect x="12" y="9" width="3" height="1" fill="#848284"/><rect x="15" y="9" width="1" height="1" fill="#FFFFFF"/><rect x="16" y="9" width="1" height="1" fill="#313031"/><rect x="1" y="10" width="1" height="1" fill="#313031"/><rect x="2" y="10" width="4" height="1" fill="#FFFFFF"/><rect x="6" y="10" width="1" height="1" fill="#313031"/><rect x="7" y="10" width="9" height="1" fill="#FFFFFF"/><rect x="16" y="10" width="1" height="1" fill="#313031"/><rect x="1" y="11" width="1" height="1" fill="#313031"/><rect x="2" y="11" width="1" height="1" fill="#FFFFFF"/><rect x="3" y="11" width="2" height="1" fill="#848284"/><rect x="5" y="11" width="1" height="1" fill="#FFFFFF"/><rect x="6" y="11" width="1" height="1" fill="#313031"/><rect x="7" y="11" width="1" height="1" fill="#FFFFFF"/><rect x="8" y="11" width="3" height="1" fill="#848284"/><rect x="11" y="11" width="1" height="1" fill="#FFFFFF"/><rect x="12" y="11" width="3" height="1" fill="#848284"/><rect x="15" y="11" width="1" height="1" fill="#FFFFFF"/><rect x="16" y="11" width="1" height="1" fill="#313031"/><rect x="1" y="12" width="1" height="1" fill="#313031"/><rect x="2" y="12" width="4" height="1" fill="#FFFFFF"/><rect x="6" y="12" width="1" height="1" fill="#313031"/><rect x="7" y="12" width="9" height="1" fill="#FFFFFF"/><rect x="16" y="12" width="1" height="1" fill="#313031"/><rect x="1" y="13" width="1" height="1" fill="#313031"/><rect x="2" y="13" width="1" height="1" fill="#FFFFFF"/><rect x="3" y="13" width="2" height="1" fill="#848284"/><rect x="5" y="13" width="1" height="1" fill="#FFFFFF"/><rect x="6" y="13" width="11" height="1" fill="#313031"/><rect x="1" y="14" width="1" height="1" fill="#313031"/><rect x="2" y="14" width="9" height="1" fill="#FFFFFF"/><rect x="11" y="14" width="1" height="1" fill="#313031"/><rect x="1" y="15" width="11" height="1" fill="#313031"/></svg>
<svg style="left:379px;top:47px" width="17" height="16"><rect x="4" y="1" width="1" height="1" fill="#848284"/><rect x="4" y="2" width="1" height="1" fill="#848284"/><rect x="5" y="2" width="1" height="1" fill="#FFFF00"/><rect x="2" y="3" width="1" height="1" fill="#FFFF00"/><rect x="4" y="3" width="1" height="1" fill="#848284"/><rect x="8" y="3" width="1" height="1" fill="#848284"/><rect x="4" y="4" width="1" height="1" fill="#FFFFFF"/><rect x="7" y="4" width="1" height="1" fill="#848284"/><rect x="1" y="5" width="1" height="1" fill="#FFFF00"/><rect x="4" y="5" width="1" height="1" fill="#FFFF00"/><rect x="5" y="5" width="2" height="1" fill="#FFFFFF"/><rect x="7" y="5" width="1" height="1" fill="#FFFF00"/><rect x="3" y="6" width="1" height="1" fill="#FFFFFF"/><rect x="4" y="6" width="1" height="1" fill="#FFFF00"/><rect x="5" y="6" width="1" height="1" fill="#FFFFFF"/><rect x="8" y="6" width="9" height="1" fill="#3130AD"/><rect x="2" y="7" width="1" height="1" fill="#FFFF00"/><rect x="4" y="7" width="1" height="1" fill="#848284"/><rect x="5" y="7" width="1" height="1" fill="#FFFFFF"/><rect x="8" y="7" width="9" height="1" fill="#3130AD"/><rect x="5" y="8" width="1" height="1" fill="#313031"/><rect x="6" y="8" width="10" height="1" fill="#FFFFFF"/><rect x="16" y="8" width="1" height="1" fill="#313031"/><rect x="1" y="9" width="1" height="1" fill="#FFFF00"/><rect x="5" y="9" width="1" height="1" fill="#313031"/><rect x="6" y="9" width="10" height="1" fill="#FFFFFF"/><rect x="16" y="9" width="1" height="1" fill="#313031"/><rect x="4" y="10" width="1" height="1" fill="#848284"/><rect x="5" y="10" width="1" height="1" fill="#313031"/><rect x="6" y="10" width="1" height="1" fill="#FFFFFF"/><rect x="7" y="10" width="2" height="1" fill="#313031"/><rect x="9" y="10" width="1" height="1" fill="#FFFFFF"/><rect x="10" y="10" width="2" height="1" fill="#313031"/><rect x="12" y="10" width="1" height="1" fill="#FFFFFF"/><rect x="13" y="10" width="2" height="1" fill="#313031"/><rect x="15" y="10" width="1" height="1" fill="#FFFFFF"/><rect x="16" y="10" width="1" height="1" fill="#313031"/><rect x="5" y="11" width="1" height="1" fill="#313031"/><rect x="6" y="11" width="10" height="1" fill="#FFFFFF"/><rect x="16" y="11" width="1" height="1" fill="#313031"/><rect x="5" y="12" width="1" height="1" fill="#313031"/><rect x="6" y="12" width="1" height="1" fill="#FFFFFF"/><rect x="7" y="12" width="2" height="1" fill="#313031"/><rect x="9" y="12" width="1" height="1" fill="#FFFFFF"/><rect x="10" y="12" width="2" height="1" fill="#313031"/><rect x="12" y="12" width="1" height="1" fill="#FFFFFF"/><rect x="13" y="12" width="2" height="1" fill="#313031"/><rect x="15" y="12" width="1" height="1" fill="#FFFFFF"/><rect x="16" y="12" width="1" height="1" fill="#313031"/><rect x="5" y="13" width="1" height="1" fill="#313031"/><rect x="6" y="13" width="10" height="1" fill="#FFFFFF"/><rect x="16" y="13" width="1" height="1" fill="#313031"/><rect x="5" y="14" width="1" height="1" fill="#313031"/><rect x="6" y="14" width="1" height="1" fill="#FFFFFF"/><rect x="7" y="14" width="2" height="1" fill="#313031"/><rect x="9" y="14" width="1" height="1" fill="#FFFFFF"/><rect x="10" y="14" width="2" height="1" fill="#313031"/><rect x="12" y="14" width="1" height="1" fill="#FFFFFF"/><rect x="13" y="14" width="2" height="1" fill="#313031"/><rect x="15" y="14" width="1" height="1" fill="#FFFFFF"/><rect x="16" y="14" width="1" height="1" fill="#313031"/><rect x="5" y="15" width="12" height="1" fill="#313031"/></svg>
<svg style="left:402px;top:55px" width="5" height="3"><rect x="0" y="0" width="5" height="1" fill="#000000"/><rect x="1" y="1" width="3" height="1" fill="#000000"/><rect x="2" y="2" width="1" height="1" fill="#000000"/></svg>
<svg style="left:421px;top:47px" width="16" height="17"><rect x="2" y="1" width="11" height="1" fill="#313031"/><rect x="1" y="2" width="1" height="1" fill="#313031"/><rect x="2" y="2" width="3" height="1" fill="#FFFFFF"/><rect x="5" y="2" width="1" height="1" fill="#FFFF00"/><rect x="6" y="2" width="3" height="1" fill="#FFFFFF"/><rect x="9" y="2" width="1" height="1" fill="#FFFF00"/><rect x="10" y="2" width="3" height="1" fill="#FFFFFF"/><rect x="13" y="2" width="1" height="1" fill="#313031"/><rect x="1" y="3" width="1" height="1" fill="#313031"/><rect x="2" y="3" width="1" height="1" fill="#FFFFFF"/><rect x="3" y="3" width="1" height="1" fill="#FFFF00"/><rect x="4" y="3" width="3" height="1" fill="#FFFFFF"/><rect x="7" y="3" width="1" height="1" fill="#FFFF00"/><rect x="8" y="3" width="3" height="1" fill="#FFFFFF"/><rect x="11" y="3" width="1" height="1" fill="#FFFF00"/><rect x="12" y="3" width="1" height="1" fill="#FFFFFF"/><rect x="13" y="3" width="1" height="1" fill="#313031"/><rect x="14" y="3" width="1" height="1" fill="#8C8A8C"/><rect x="1" y="4" width="1" height="1" fill="#313031"/><rect x="2" y="4" width="4" height="1" fill="#FFFFFF"/><rect x="6" y="4" width="4" height="1" fill="#3130AD"/><rect x="10" y="4" width="3" height="1" fill="#FFFFFF"/><rect x="13" y="4" width="1" height="1" fill="#313031"/><rect x="14" y="4" width="1" height="1" fill="#8C8A8C"/><rect x="1" y="5" width="1" height="1" fill="#313031"/><rect x="2" y="5" width="1" height="1" fill="#FFFFFF"/><rect x="3" y="5" width="1" height="1" fill="#FFFF00"/><rect x="4" y="5" width="1" height="1" fill="#FFFFFF"/><rect x="5" y="5" width="2" height="1" fill="#3130AD"/><rect x="7" y="5" width="2" height="1" fill="#FFFFFF"/><rect x="9" y="5" width="2" height="1" fill="#3130AD"/><rect x="11" y="5" width="1" height="1" fill="#FFFF00"/><rect x="12" y="5" width="1" height="1" fill="#FFFFFF"/><rect x="13" y="5" width="1" height="1" fill="#313031"/><rect x="14" y="5" width="1" height="1" fill="#8C8A8C"/><rect x="1" y="6" width="1" height="1" fill="#313031"/><rect x="2" y="6" width="7" height="1" fill="#FFFFFF"/><rect x="9" y="6" width="2" height="1" fill="#3130AD"/><rect x="11" y="6" width="2" height="1" fill="#FFFFFF"/><rect x="13" y="6" width="1" height="1" fill="#313031"/><rect x="14" y="6" width="1" height="1" fill="#8C8A8C"/><rect x="1" y="7" width="1" height="1" fill="#313031"/><rect x="2" y="7" width="1" height="1" fill="#FFFFFF"/><rect x="3" y="7" width="1" height="1" fill="#FFFF00"/><rect x="4" y="7" width="4" height="1" fill="#FFFFFF"/><rect x="8" y="7" width="2" height="1" fill="#3130AD"/><rect x="10" y="7" width="1" height="1" fill="#FFFFFF"/><rect x="11" y="7" width="1" height="1" fill="#FFFF00"/><rect x="12" y="7" width="1" height="1" fill="#FFFFFF"/><rect x="13" y="7" width="1" height="1" fill="#313031"/><rect x="14" y="7" width="1" height="1" fill="#8C8A8C"/><rect x="1" y="8" width="1" height="1" fill="#313031"/><rect x="2" y="8" width="5" height="1" fill="#FFFFFF"/><rect x="7" y="8" width="2" height="1" fill="#3130AD"/><rect x="9" y="8" width="4" height="1" fill="#FFFFFF"/><rect x="13" y="8" width="1" height="1" fill="#313031"/><rect x="14" y="8" width="1" height="1" fill="#8C8A8C"/><rect x="1" y="9" width="1" height="1" fill="#313031"/><rect x="2" y="9" width="1" height="1" fill="#FFFFFF"/><rect x="3" y="9" width="1" height="1" fill="#FFFF00"/><rect x="4" y="9" width="3" height="1" fill="#FFFFFF"/><rect x="7" y="9" width="2" height="1" fill="#3130AD"/><rect x="9" y="9" width="2" height="1" fill="#FFFFFF"/><rect x="11" y="9" width="1" height="1" fill="#FFFF00"/><rect x="12" y="9" width="1" height="1" fill="#FFFFFF"/><rect x="13" y="9" width="1" height="1" fill="#313031"/><rect x="14" y="9" width="1" height="1" fill="#8C8A8C"/><rect x="1" y="10" width="1" height="1" fill="#313031"/><rect x="2" y="10" width="11" height="1" fill="#FFFFFF"/><rect x="13" y="10" width="1" height="1" fill="#313031"/><rect x="14" y="10" width="1" height="1" fill="#8C8A8C"/><rect x="1" y="11" width="1" height="1" fill="#313031"/><rect x="2" y="11" width="1" height="1" fill="#FFFFFF"/><rect x="3" y="11" width="1" height="1" fill="#FFFF00"/><rect x="4" y="11" width="3" height="1" fill="#FFFFFF"/><rect x="7" y="11" width="2" height="1" fill="#3130AD"/><rect x="9" y="11" width="2" height="1" fill="#FFFFFF"/><rect x="11" y="11" width="1" height="1" fill="#FFFF00"/><rect x="12" y="11" width="1" height="1" fill="#FFFFFF"/><rect x="13" y="11" width="1" height="1" fill="#313031"/><rect x="14" y="11" width="1" height="1" fill="#8C8A8C"/><rect x="1" y="12" width="1" height="1" fill="#313031"/><rect x="2" y="12" width="7" height="1" fill="#FFFFFF"/><rect x="9" y="12" width="1" height="1" fill="#FFFF00"/><rect x="10" y="12" width="3" height="1" fill="#FFFFFF"/><rect x="13" y="12" width="1" height="1" fill="#313031"/><rect x="14" y="12" width="1" height="1" fill="#8C8A8C"/><rect x="2" y="13" width="7" height="1" fill="#313031"/><rect x="9" y="13" width="1" height="1" fill="#FFFF00"/><rect x="10" y="13" width="4" height="1" fill="#313031"/><rect x="14" y="13" width="1" height="1" fill="#8C8A8C"/><rect x="9" y="14" width="1" height="1" fill="#313031"/><rect x="10" y="14" width="1" height="1" fill="#FFFF00"/><rect x="11" y="14" width="1" height="1" fill="#313031"/><rect x="12" y="14" width="2" height="1" fill="#8C8A8C"/><rect x="10" y="15" width="2" height="1" fill="#313031"/><rect x="11" y="16" width="1" height="1" fill="#313031"/></svg>
<svg style="left:443px;top:60px" width="5" height="3"><rect x="0" y="0" width="5" height="1" fill="#000000"/><rect x="1" y="1" width="3" height="1" fill="#000000"/><rect x="2" y="2" width="1" height="1" fill="#000000"/></svg>
<div class="sunk" style="left:0px;top:69px;width:1024px;height:652px;background:#848284"></div>
<div class="frame" style="left:32px;top:83px;width:480px;height:40px"></div>
<div class="cap-in" style="left:36px;top:87px;width:472px"></div>
<svg style="left:37px;top:87px" width="18" height="16"><rect x="3" y="1" width="11" height="1" fill="#000084"/><rect x="3" y="2" width="11" height="1" fill="#000084"/><rect x="3" y="3" width="1" height="1" fill="#000000"/><rect x="4" y="3" width="9" height="1" fill="#FFFFFF"/><rect x="13" y="3" width="1" height="1" fill="#000000"/><rect x="3" y="4" width="1" height="1" fill="#000000"/><rect x="4" y="4" width="2" height="1" fill="#FFFFFF"/><rect x="6" y="4" width="11" height="1" fill="#000084"/><rect x="3" y="5" width="1" height="1" fill="#000000"/><rect x="4" y="5" width="2" height="1" fill="#FFFFFF"/><rect x="6" y="5" width="11" height="1" fill="#000084"/><rect x="1" y="6" width="5" height="1" fill="#000084"/><rect x="6" y="6" width="1" height="1" fill="#000000"/><rect x="7" y="6" width="9" height="1" fill="#FFFFFF"/><rect x="16" y="6" width="1" height="1" fill="#000000"/><rect x="1" y="7" width="5" height="1" fill="#000084"/><rect x="6" y="7" width="1" height="1" fill="#000000"/><rect x="7" y="7" width="1" height="1" fill="#FFFFFF"/><rect x="8" y="7" width="3" height="1" fill="#848284"/><rect x="11" y="7" width="1" height="1" fill="#FFFFFF"/><rect x="12" y="7" width="3" height="1" fill="#848284"/><rect x="15" y="7" width="1" height="1" fill="#FFFFFF"/><rect x="16" y="7" width="1" height="1" fill="#000000"/><rect x="1" y="8" width="1" height="1" fill="#000000"/><rect x="2" y="8" width="4" height="1" fill="#FFFFFF"/><rect x="6" y="8" width="1" height="1" fill="#000000"/><rect x="7" y="8" width="9" height="1" fill="#FFFFFF"/><rect x="16" y="8" width="1" height="1" fill="#000000"/><rect x="1" y="9" width="1" height="1" fill="#000000"/><rect x="2" y="9" width="1" height="1" fill="#FFFFFF"/><rect x="3" y="9" width="2" height="1" fill="#848284"/><rect x="5" y="9" width="1" height="1" fill="#FFFFFF"/><rect x="6" y="9" width="1" height="1" fill="#000000"/><rect x="7" y="9" width="1" height="1" fill="#FFFFFF"/><rect x="8" y="9" width="3" height="1" fill="#848284"/><rect x="11" y="9" width="1" height="1" fill="#FFFFFF"/><rect x="12" y="9" width="3" height="1" fill="#848284"/><rect x="15" y="9" width="1" height="1" fill="#FFFFFF"/><rect x="16" y="9" width="1" height="1" fill="#000000"/><rect x="1" y="10" width="1" height="1" fill="#000000"/><rect x="2" y="10" width="4" height="1" fill="#FFFFFF"/><rect x="6" y="10" width="1" height="1" fill="#000000"/><rect x="7" y="10" width="9" height="1" fill="#FFFFFF"/><rect x="16" y="10" width="1" height="1" fill="#000000"/><rect x="1" y="11" width="1" height="1" fill="#000000"/><rect x="2" y="11" width="1" height="1" fill="#FFFFFF"/><rect x="3" y="11" width="2" height="1" fill="#848284"/><rect x="5" y="11" width="1" height="1" fill="#FFFFFF"/><rect x="6" y="11" width="1" height="1" fill="#000000"/><rect x="7" y="11" width="1" height="1" fill="#FFFFFF"/><rect x="8" y="11" width="3" height="1" fill="#848284"/><rect x="11" y="11" width="1" height="1" fill="#FFFFFF"/><rect x="12" y="11" width="3" height="1" fill="#848284"/><rect x="15" y="11" width="1" height="1" fill="#FFFFFF"/><rect x="16" y="11" width="1" height="1" fill="#000000"/><rect x="1" y="12" width="1" height="1" fill="#000000"/><rect x="2" y="12" width="4" height="1" fill="#FFFFFF"/><rect x="6" y="12" width="1" height="1" fill="#000000"/><rect x="7" y="12" width="9" height="1" fill="#FFFFFF"/><rect x="16" y="12" width="1" height="1" fill="#000000"/><rect x="1" y="13" width="1" height="1" fill="#000000"/><rect x="2" y="13" width="1" height="1" fill="#FFFFFF"/><rect x="3" y="13" width="2" height="1" fill="#848284"/><rect x="5" y="13" width="1" height="1" fill="#FFFFFF"/><rect x="6" y="13" width="11" height="1" fill="#000000"/><rect x="1" y="14" width="1" height="1" fill="#000000"/><rect x="2" y="14" width="9" height="1" fill="#FFFFFF"/><rect x="11" y="14" width="1" height="1" fill="#000000"/><rect x="1" y="15" width="11" height="1" fill="#000000"/></svg>
<div class="capt" style="left:56px;top:90px;color:#D6D3CE">Архив : база данных (формат Access 2000)</div>
<div class="cb" style="left:456px;top:89px"><svg style="left:0;top:0" width="16" height="14"><rect x="4" y="9" width="6" height="2" fill="#000000"/></svg></div>
<div class="cb" style="left:472px;top:89px"><svg style="left:0;top:0" width="16" height="14"><rect x="3" y="2" width="9" height="2" fill="#000000"/><rect x="3" y="2" width="1" height="9" fill="#000000"/><rect x="11" y="2" width="1" height="9" fill="#000000"/><rect x="3" y="10" width="9" height="1" fill="#000000"/></svg></div>
<div class="cb" style="left:490px;top:89px"><svg style="left:0;top:0" width="16" height="14"><rect x="4" y="3" width="1" height="1" fill="#000000"/><rect x="5" y="3" width="1" height="1" fill="#000000"/><rect x="10" y="3" width="1" height="1" fill="#000000"/><rect x="11" y="3" width="1" height="1" fill="#000000"/><rect x="5" y="4" width="1" height="1" fill="#000000"/><rect x="6" y="4" width="1" height="1" fill="#000000"/><rect x="9" y="4" width="1" height="1" fill="#000000"/><rect x="10" y="4" width="1" height="1" fill="#000000"/><rect x="6" y="5" width="1" height="1" fill="#000000"/><rect x="7" y="5" width="1" height="1" fill="#000000"/><rect x="8" y="5" width="1" height="1" fill="#000000"/><rect x="9" y="5" width="1" height="1" fill="#000000"/><rect x="7" y="6" width="1" height="1" fill="#000000"/><rect x="8" y="6" width="1" height="1" fill="#000000"/><rect x="6" y="7" width="1" height="1" fill="#000000"/><rect x="7" y="7" width="1" height="1" fill="#000000"/><rect x="8" y="7" width="1" height="1" fill="#000000"/><rect x="9" y="7" width="1" height="1" fill="#000000"/><rect x="5" y="8" width="1" height="1" fill="#000000"/><rect x="6" y="8" width="1" height="1" fill="#000000"/><rect x="9" y="8" width="1" height="1" fill="#000000"/><rect x="10" y="8" width="1" height="1" fill="#000000"/><rect x="4" y="9" width="1" height="1" fill="#000000"/><rect x="5" y="9" width="1" height="1" fill="#000000"/><rect x="10" y="9" width="1" height="1" fill="#000000"/><rect x="11" y="9" width="1" height="1" fill="#000000"/></svg></div>
<div class="frame" style="left:20px;top:111px;width:984px;height:608px"></div>
<div class="cap-in" style="left:24px;top:115px;width:976px"></div>
<svg style="left:28px;top:118px" width="12" height="12"><rect x="0" y="0" width="12" height="1" fill="#000084"/><rect x="0" y="1" width="12" height="1" fill="#000084"/><rect x="0" y="2" width="1" height="1" fill="#000000"/><rect x="1" y="2" width="10" height="1" fill="#FFFFFF"/><rect x="11" y="2" width="1" height="1" fill="#000000"/><rect x="0" y="3" width="1" height="1" fill="#000000"/><rect x="1" y="3" width="1" height="1" fill="#FFFFFF"/><rect x="2" y="3" width="2" height="1" fill="#000000"/><rect x="4" y="3" width="1" height="1" fill="#FFFFFF"/><rect x="5" y="3" width="2" height="1" fill="#000000"/><rect x="7" y="3" width="1" height="1" fill="#FFFFFF"/><rect x="8" y="3" width="2" height="1" fill="#000000"/><rect x="10" y="3" width="1" height="1" fill="#FFFFFF"/><rect x="11" y="3" width="1" height="1" fill="#000000"/><rect x="0" y="4" width="1" height="1" fill="#000000"/><rect x="1" y="4" width="10" height="1" fill="#FFFFFF"/><rect x="11" y="4" width="1" height="1" fill="#000000"/><rect x="0" y="5" width="1" height="1" fill="#000000"/><rect x="1" y="5" width="1" height="1" fill="#FFFFFF"/><rect x="2" y="5" width="2" height="1" fill="#000000"/><rect x="4" y="5" width="1" height="1" fill="#FFFFFF"/><rect x="5" y="5" width="2" height="1" fill="#000000"/><rect x="7" y="5" width="1" height="1" fill="#FFFFFF"/><rect x="8" y="5" width="2" height="1" fill="#000000"/><rect x="10" y="5" width="1" height="1" fill="#FFFFFF"/><rect x="11" y="5" width="1" height="1" fill="#000000"/><rect x="0" y="6" width="1" height="1" fill="#000000"/><rect x="1" y="6" width="10" height="1" fill="#FFFFFF"/><rect x="11" y="6" width="1" height="1" fill="#000000"/><rect x="0" y="7" width="1" height="1" fill="#000000"/><rect x="1" y="7" width="1" height="1" fill="#FFFFFF"/><rect x="2" y="7" width="2" height="1" fill="#000000"/><rect x="4" y="7" width="1" height="1" fill="#FFFFFF"/><rect x="5" y="7" width="2" height="1" fill="#000000"/><rect x="7" y="7" width="1" height="1" fill="#FFFFFF"/><rect x="8" y="7" width="2" height="1" fill="#000000"/><rect x="10" y="7" width="1" height="1" fill="#FFFFFF"/><rect x="11" y="7" width="1" height="1" fill="#000000"/><rect x="0" y="8" width="1" height="1" fill="#000000"/><rect x="1" y="8" width="10" height="1" fill="#FFFFFF"/><rect x="11" y="8" width="1" height="1" fill="#000000"/><rect x="0" y="9" width="1" height="1" fill="#000000"/><rect x="1" y="9" width="1" height="1" fill="#FFFFFF"/><rect x="2" y="9" width="2" height="1" fill="#000000"/><rect x="4" y="9" width="1" height="1" fill="#FFFFFF"/><rect x="5" y="9" width="2" height="1" fill="#000000"/><rect x="7" y="9" width="1" height="1" fill="#FFFFFF"/><rect x="8" y="9" width="2" height="1" fill="#000000"/><rect x="10" y="9" width="1" height="1" fill="#FFFFFF"/><rect x="11" y="9" width="1" height="1" fill="#000000"/><rect x="0" y="10" width="1" height="1" fill="#000000"/><rect x="1" y="10" width="10" height="1" fill="#FFFFFF"/><rect x="11" y="10" width="1" height="1" fill="#000000"/><rect x="0" y="11" width="12" height="1" fill="#000000"/></svg>
<div class="capt" style="left:44px;top:118px;color:#D6D3CE">Подразделение : таблица</div>
<div class="cb" style="left:948px;top:117px"><svg style="left:0;top:0" width="16" height="14"><rect x="4" y="9" width="6" height="2" fill="#000000"/></svg></div>
<div class="cb" style="left:964px;top:117px"><svg style="left:0;top:0" width="16" height="14"><rect x="3" y="2" width="9" height="2" fill="#000000"/><rect x="3" y="2" width="1" height="9" fill="#000000"/><rect x="11" y="2" width="1" height="9" fill="#000000"/><rect x="3" y="10" width="9" height="1" fill="#000000"/></svg></div>
<div class="cb" style="left:982px;top:117px"><svg style="left:0;top:0" width="16" height="14"><rect x="4" y="3" width="1" height="1" fill="#000000"/><rect x="5" y="3" width="1" height="1" fill="#000000"/><rect x="10" y="3" width="1" height="1" fill="#000000"/><rect x="11" y="3" width="1" height="1" fill="#000000"/><rect x="5" y="4" width="1" height="1" fill="#000000"/><rect x="6" y="4" width="1" height="1" fill="#000000"/><rect x="9" y="4" width="1" height="1" fill="#000000"/><rect x="10" y="4" width="1" height="1" fill="#000000"/><rect x="6" y="5" width="1" height="1" fill="#000000"/><rect x="7" y="5" width="1" height="1" fill="#000000"/><rect x="8" y="5" width="1" height="1" fill="#000000"/><rect x="9" y="5" width="1" height="1" fill="#000000"/><rect x="7" y="6" width="1" height="1" fill="#000000"/><rect x="8" y="6" width="1" height="1" fill="#000000"/><rect x="6" y="7" width="1" height="1" fill="#000000"/><rect x="7" y="7" width="1" height="1" fill="#000000"/><rect x="8" y="7" width="1" height="1" fill="#000000"/><rect x="9" y="7" width="1" height="1" fill="#000000"/><rect x="5" y="8" width="1" height="1" fill="#000000"/><rect x="6" y="8" width="1" height="1" fill="#000000"/><rect x="9" y="8" width="1" height="1" fill="#000000"/><rect x="10" y="8" width="1" height="1" fill="#000000"/><rect x="4" y="9" width="1" height="1" fill="#000000"/><rect x="5" y="9" width="1" height="1" fill="#000000"/><rect x="10" y="9" width="1" height="1" fill="#000000"/><rect x="11" y="9" width="1" height="1" fill="#000000"/></svg></div>
<div class="sunk" style="left:24px;top:134px;width:976px;height:581px;background:#848284"></div>
<div class="a" style="left:26px;top:136px;width:618px;height:18px;background:#000000;"></div>
<div class="a" style="left:26px;top:136px;width:18px;height:17px;background:#D6D3CE;box-shadow:inset 1px 1px #FFFFFF"></div>
<div class="a" style="left:45px;top:136px;width:14px;height:17px;background:#D6D3CE;box-shadow:inset 1px 1px #FFFFFF"></div>
<div class="a" style="left:60px;top:136px;width:128px;height:17px;background:#D6D3CE;box-shadow:inset 1px 1px #FFFFFF"></div>
<div class="a" style="left:189px;top:136px;width:192px;height:17px;background:#D6D3CE;box-shadow:inset 1px 1px #FFFFFF"></div>
<div class="a" style="left:382px;top:136px;width:126px;height:17px;background:#D6D3CE;box-shadow:inset 1px 1px #FFFFFF"></div>
<div class="a" style="left:509px;top:136px;width:134px;height:17px;background:#D6D3CE;box-shadow:inset 1px 1px #FFFFFF"></div>
<div class="a" style="left:26px;top:153px;width:19px;height:37px;background:#000000;"></div>
<div class="a" style="left:26px;top:154px;width:18px;height:17px;background:#D6D3CE;box-shadow:inset 1px 1px #FFFFFF"></div>
<div class="a" style="left:26px;top:172px;width:18px;height:17px;background:#D6D3CE;box-shadow:inset 1px 1px #FFFFFF"></div>
<div class="a" style="left:45px;top:154px;width:598px;height:35px;background:#FFFFFF;"></div>
<div class="a" style="left:45px;top:171px;width:598px;height:1px;background:#C6C3C6;"></div>
<div class="a" style="left:59px;top:154px;width:1px;height:35px;background:#C6C3C6;"></div>
<div class="a" style="left:188px;top:154px;width:1px;height:35px;background:#C6C3C6;"></div>
<div class="a" style="left:381px;top:154px;width:1px;height:35px;background:#C6C3C6;"></div>
<div class="a" style="left:508px;top:154px;width:1px;height:35px;background:#C6C3C6;"></div>
<div class="t dt" style="left:61px;top:137px;width:127px;text-align:center">Код подразделения</div>
<div class="t dt" style="left:190px;top:137px;width:191px;text-align:center">Наименование подразделения</div>
<div class="t dt" style="left:383px;top:137px;width:125px;text-align:center">Местонахождение</div>
<div class="t dt" style="left:510px;top:137px;width:133px;text-align:center">Ответственное лицо</div>
<div class="t dt" style="left:60px;top:155px;width:110px;text-align:right">1</div>
<div class="t dt" style="left:192px;top:155px">Конструкторский отдел</div>
<div class="t dt" style="left:385px;top:155px">кабинет 12</div>
<div class="t dt" style="left:512px;top:155px">Фуринов</div>
<svg style="left:33px;top:157px" width="7" height="12"><path d="M0 0L7 6L0 12z" fill="#000000" shape-rendering="auto"/></svg>
<svg style="left:31px;top:176px" width="9" height="9" shape-rendering="auto"><path d="M4.5 0v9 M0 4.5h9 M1.3 1.3l6.4 6.4 M7.7 1.3l-6.4 6.4" stroke="#000000" stroke-width="1.2"/></svg>
<div class="a" style="left:48px;top:158px;width:9px;height:9px;background:#FFFFFF;box-shadow:inset 0 0 0 1px #CEC7BD"></div>
<div class="a" style="left:50px;top:162px;width:5px;height:1px;background:#000000;"></div>
<div class="a" style="left:52px;top:160px;width:1px;height:5px;background:#000000;"></div>
<div class="a" style="left:26px;top:696px;width:972px;height:18px;background:#D6D3CE;"></div>
<div class="t" style="left:31px;top:700px;">Запись:</div>
<div class="a" style="left:76px;top:698px;width:20px;height:15px;background:#D6D3CE;box-shadow:inset -1px -1px #000000,inset 1px 1px #FFFFFF"><svg style="left:0;top:0" width="20" height="15"><rect x="5" y="4" width="2" height="7" fill="#000000"/><path d="M13 4v7L9 7.5z" fill="#000000" shape-rendering="auto"/></svg></div>
<div class="a" style="left:96px;top:698px;width:20px;height:15px;background:#D6D3CE;box-shadow:inset -1px -1px #000000,inset 1px 1px #FFFFFF"><svg style="left:0;top:0" width="20" height="15"><path d="M11 4v7L7 7.5z" fill="#848284" shape-rendering="auto"/><rect x="11" y="5" width="1" height="6" fill="#FFFFFF"/></svg></div>
<div class="a" style="left:120px;top:697px;width:64px;height:17px;background:#FFFFFF;box-shadow:inset 1px 1px #848284,inset 2px 2px #000000,inset -1px -1px #FFFFFF,inset -2px -2px #D6D3CE"></div>
<div class="t" style="left:120px;top:700px;width:60px;text-align:right">1</div>
<div class="a" style="left:188px;top:698px;width:20px;height:15px;background:#D6D3CE;box-shadow:inset -1px -1px #000000,inset 1px 1px #FFFFFF"><svg style="left:0;top:0" width="20" height="15"><path d="M7 4v7L11 7.5z" fill="#000000" shape-rendering="auto"/></svg></div>
<div class="a" style="left:208px;top:698px;width:20px;height:15px;background:#D6D3CE;box-shadow:inset -1px -1px #000000,inset 1px 1px #FFFFFF"><svg style="left:0;top:0" width="20" height="15"><path d="M5 4v7L9 7.5z" fill="#000000" shape-rendering="auto"/><rect x="11" y="4" width="2" height="7" fill="#000000"/></svg></div>
<div class="a" style="left:228px;top:698px;width:20px;height:15px;background:#D6D3CE;box-shadow:inset -1px -1px #000000,inset 1px 1px #FFFFFF"><svg style="left:0;top:0" width="20" height="15"><path d="M3 4v7L7 7.5z" fill="#000000" shape-rendering="auto"/><path d="M12.5 4v7 M9 7.5h7 M10 5l5 5 M15 5l-5 5" stroke="#000000" stroke-width="1.2" shape-rendering="auto"/></svg></div>
<div class="t" style="left:253px;top:700px;">из&nbsp; 1 (Фильтр)</div>
<div class="frame" style="left:34px;top:291px;width:962px;height:277px"></div>
<div class="cap-act" style="left:38px;top:295px;width:954px"></div>
<svg style="left:38px;top:295px" width="20" height="16"><rect x="6" y="2" width="11" height="1" fill="#000084"/><rect x="6" y="3" width="11" height="1" fill="#000084"/><rect x="6" y="4" width="1" height="1" fill="#000000"/><rect x="7" y="4" width="9" height="1" fill="#FFFFFF"/><rect x="16" y="4" width="1" height="1" fill="#000000"/><rect x="6" y="5" width="1" height="1" fill="#000000"/><rect x="7" y="5" width="1" height="1" fill="#FFFFFF"/><rect x="8" y="5" width="1" height="1" fill="#000000"/><rect x="9" y="5" width="1" height="1" fill="#FFFFFF"/><rect x="10" y="5" width="1" height="1" fill="#000000"/><rect x="11" y="5" width="1" height="1" fill="#FFFFFF"/><rect x="12" y="5" width="1" height="1" fill="#000000"/><rect x="13" y="5" width="1" height="1" fill="#FFFFFF"/><rect x="14" y="5" width="1" height="1" fill="#000000"/><rect x="15" y="5" width="1" height="1" fill="#FFFFFF"/><rect x="16" y="5" width="1" height="1" fill="#000000"/><rect x="2" y="6" width="11" height="1" fill="#000084"/><rect x="13" y="6" width="3" height="1" fill="#FFFFFF"/><rect x="16" y="6" width="1" height="1" fill="#000000"/><rect x="2" y="7" width="11" height="1" fill="#000084"/><rect x="13" y="7" width="1" height="1" fill="#FFFFFF"/><rect x="14" y="7" width="1" height="1" fill="#000000"/><rect x="15" y="7" width="1" height="1" fill="#FFFFFF"/><rect x="16" y="7" width="1" height="1" fill="#000000"/><rect x="2" y="8" width="1" height="1" fill="#000000"/><rect x="3" y="8" width="3" height="1" fill="#FFFFFF"/><rect x="6" y="8" width="1" height="1" fill="#000000"/><rect x="7" y="8" width="5" height="1" fill="#FFFFFF"/><rect x="12" y="8" width="1" height="1" fill="#000000"/><rect x="13" y="8" width="3" height="1" fill="#FFFFFF"/><rect x="16" y="8" width="1" height="1" fill="#000000"/><rect x="2" y="9" width="1" height="1" fill="#000000"/><rect x="3" y="9" width="1" height="1" fill="#FFFFFF"/><rect x="4" y="9" width="1" height="1" fill="#000000"/><rect x="5" y="9" width="1" height="1" fill="#FFFFFF"/><rect x="6" y="9" width="1" height="1" fill="#000000"/><rect x="7" y="9" width="1" height="1" fill="#FFFFFF"/><rect x="8" y="9" width="1" height="1" fill="#000000"/><rect x="9" y="9" width="1" height="1" fill="#FFFFFF"/><rect x="10" y="9" width="1" height="1" fill="#000000"/><rect x="11" y="9" width="1" height="1" fill="#FFFFFF"/><rect x="12" y="9" width="1" height="1" fill="#000000"/><rect x="13" y="9" width="1" height="1" fill="#FFFFFF"/><rect x="14" y="9" width="1" height="1" fill="#000000"/><rect x="15" y="9" width="1" height="1" fill="#FFFFFF"/><rect x="16" y="9" width="1" height="1" fill="#000000"/><rect x="2" y="10" width="1" height="1" fill="#000000"/><rect x="3" y="10" width="3" height="1" fill="#FFFFFF"/><rect x="6" y="10" width="1" height="1" fill="#000000"/><rect x="7" y="10" width="5" height="1" fill="#FFFFFF"/><rect x="12" y="10" width="1" height="1" fill="#000000"/><rect x="13" y="10" width="3" height="1" fill="#FFFFFF"/><rect x="16" y="10" width="1" height="1" fill="#000000"/><rect x="2" y="11" width="1" height="1" fill="#000000"/><rect x="3" y="11" width="1" height="1" fill="#FFFFFF"/><rect x="4" y="11" width="1" height="1" fill="#000000"/><rect x="5" y="11" width="1" height="1" fill="#FFFFFF"/><rect x="6" y="11" width="11" height="1" fill="#000000"/><rect x="2" y="12" width="1" height="1" fill="#000000"/><rect x="3" y="12" width="9" height="1" fill="#FFFFFF"/><rect x="12" y="12" width="1" height="1" fill="#000000"/><rect x="2" y="13" width="1" height="1" fill="#000000"/><rect x="3" y="13" width="1" height="1" fill="#FFFFFF"/><rect x="4" y="13" width="1" height="1" fill="#000000"/><rect x="5" y="13" width="1" height="1" fill="#FFFFFF"/><rect x="6" y="13" width="1" height="1" fill="#000000"/><rect x="7" y="13" width="1" height="1" fill="#FFFFFF"/><rect x="8" y="13" width="1" height="1" fill="#000000"/><rect x="9" y="13" width="1" height="1" fill="#FFFFFF"/><rect x="10" y="13" width="1" height="1" fill="#000000"/><rect x="11" y="13" width="1" height="1" fill="#FFFFFF"/><rect x="12" y="13" width="1" height="1" fill="#000000"/><rect x="2" y="14" width="1" height="1" fill="#000000"/><rect x="3" y="14" width="9" height="1" fill="#FFFFFF"/><rect x="12" y="14" width="1" height="1" fill="#000000"/><rect x="2" y="15" width="11" height="1" fill="#000000"/></svg>
<div class="capt" style="left:58px;top:298px;color:#FFFFFF">ПодразделениеФильтр2 : фильтр</div>
<div class="cb" style="left:940px;top:297px"><svg style="left:0;top:0" width="16" height="14"><rect x="4" y="9" width="6" height="2" fill="#000000"/></svg></div>
<div class="cb" style="left:956px;top:297px"><svg style="left:0;top:0" width="16" height="14"><rect x="3" y="2" width="9" height="2" fill="#000000"/><rect x="3" y="2" width="1" height="9" fill="#000000"/><rect x="11" y="2" width="1" height="9" fill="#000000"/><rect x="3" y="10" width="9" height="1" fill="#000000"/></svg></div>
<div class="cb" style="left:974px;top:297px"><svg style="left:0;top:0" width="16" height="14"><rect x="4" y="3" width="1" height="1" fill="#000000"/><rect x="5" y="3" width="1" height="1" fill="#000000"/><rect x="10" y="3" width="1" height="1" fill="#000000"/><rect x="11" y="3" width="1" height="1" fill="#000000"/><rect x="5" y="4" width="1" height="1" fill="#000000"/><rect x="6" y="4" width="1" height="1" fill="#000000"/><rect x="9" y="4" width="1" height="1" fill="#000000"/><rect x="10" y="4" width="1" height="1" fill="#000000"/><rect x="6" y="5" width="1" height="1" fill="#000000"/><rect x="7" y="5" width="1" height="1" fill="#000000"/><rect x="8" y="5" width="1" height="1" fill="#000000"/><rect x="9" y="5" width="1" height="1" fill="#000000"/><rect x="7" y="6" width="1" height="1" fill="#000000"/><rect x="8" y="6" width="1" height="1" fill="#000000"/><rect x="6" y="7" width="1" height="1" fill="#000000"/><rect x="7" y="7" width="1" height="1" fill="#000000"/><rect x="8" y="7" width="1" height="1" fill="#000000"/><rect x="9" y="7" width="1" height="1" fill="#000000"/><rect x="5" y="8" width="1" height="1" fill="#000000"/><rect x="6" y="8" width="1" height="1" fill="#000000"/><rect x="9" y="8" width="1" height="1" fill="#000000"/><rect x="10" y="8" width="1" height="1" fill="#000000"/><rect x="4" y="9" width="1" height="1" fill="#000000"/><rect x="5" y="9" width="1" height="1" fill="#000000"/><rect x="10" y="9" width="1" height="1" fill="#000000"/><rect x="11" y="9" width="1" height="1" fill="#000000"/></svg></div>
<div class="sunk" style="left:38px;top:314px;width:954px;height:143px;background:#D6D3CE"></div>
<div class="frame" style="left:78px;top:322px;width:96px;height:107px"></div>
<div class="cap-in" style="left:82px;top:326px;width:88px"></div>
<div class="capt" style="left:84px;top:329px;color:#D6D3CE">Подразделе...</div>
<div class="sunk" style="left:82px;top:345px;width:88px;height:80px;background:#FFFFFF"></div>
<svg style="left:86px;top:351px" width="5" height="5"><rect x="2" y="0" width="1" height="1" fill="#000000"/><rect x="0" y="1" width="1" height="1" fill="#000000"/><rect x="2" y="1" width="1" height="1" fill="#000000"/><rect x="4" y="1" width="1" height="1" fill="#000000"/><rect x="1" y="2" width="3" height="1" fill="#000000"/><rect x="0" y="3" width="1" height="1" fill="#000000"/><rect x="2" y="3" width="1" height="1" fill="#000000"/><rect x="4" y="3" width="1" height="1" fill="#000000"/><rect x="2" y="4" width="1" height="1" fill="#000000"/></svg>
<div class="t" style="left:85px;top:365px;font-weight:bold;width:82px;overflow:hidden;letter-spacing:-0.35px">Код подразделе</div>
<div class="t" style="left:85px;top:380px;width:83px;overflow:hidden">Наименование п</div>
<div class="t" style="left:85px;top:395px;width:83px;overflow:hidden">Местонахожден</div>
<div class="t" style="left:85px;top:410px;width:83px;overflow:hidden">Ответственное</div>
<div class="a track" style="left:974px;top:316px;width:16px;height:123px"></div>
<div class="sb" style="left:974px;top:316px"><svg style="left:0;top:0" width="16" height="16"><rect x="7" y="6" width="1" height="1" fill="#000000"/><rect x="6" y="7" width="3" height="1" fill="#000000"/><rect x="5" y="8" width="5" height="1" fill="#000000"/><rect x="4" y="9" width="7" height="1" fill="#000000"/></svg></div>
<div class="sb" style="left:974px;top:332px"><svg style="left:0;top:0" width="16" height="16"></svg></div>
<div class="sb" style="left:974px;top:423px"><svg style="left:0;top:0" width="16" height="16"><rect x="4" y="6" width="7" height="1" fill="#000000"/><rect x="5" y="7" width="5" height="1" fill="#000000"/><rect x="6" y="8" width="3" height="1" fill="#000000"/><rect x="7" y="9" width="1" height="1" fill="#000000"/></svg></div>
<div class="a track" style="left:40px;top:439px;width:934px;height:16px"></div>
<div class="sb" style="left:40px;top:439px"><svg style="left:0;top:0" width="16" height="16"><rect x="5" y="7" width="1" height="1" fill="#000000"/><rect x="6" y="6" width="1" height="3" fill="#000000"/><rect x="7" y="5" width="1" height="5" fill="#000000"/><rect x="8" y="4" width="1" height="7" fill="#000000"/></svg></div>
<div class="sb" style="left:56px;top:439px"><svg style="left:0;top:0" width="16" height="16"></svg></div>
<div class="sb" style="left:958px;top:439px"><svg style="left:0;top:0" width="16" height="16"><rect x="6" y="4" width="1" height="7" fill="#000000"/><rect x="7" y="5" width="1" height="5" fill="#000000"/><rect x="8" y="6" width="1" height="3" fill="#000000"/><rect x="9" y="7" width="1" height="1" fill="#000000"/></svg></div>
<div class="a" style="left:38px;top:459px;width:954px;height:6px;background:#D6D3CE;box-shadow:inset 0 1px #000000,inset 0 -1px #000000,inset 1px 0 #000000,inset -1px 0 #000000,inset 0 2px #FFFFFF,inset 2px 0 #FFFFFF,inset 0 -2px #848284"></div>
<div class="t" style="left:40px;top:478px;width:124px;text-align:right">Поле:</div>
<div class="t" style="left:40px;top:492px;width:124px;text-align:right">Сортировка:</div>
<div class="t" style="left:40px;top:506px;width:124px;text-align:right">Условие отбора:</div>
<div class="t" style="left:40px;top:520px;width:124px;text-align:right">или:</div>
<div class="a" style="left:171px;top:470px;width:816px;height:80px;background:#000000;"></div>
<div class="a" style="left:172px;top:471px;width:798px;height:6px;background:#D6D3CE;box-shadow:inset 1px 1px #FFFFFF"></div>
<div class="a" style="left:172px;top:478px;width:798px;height:55px;background:#FFFFFF;"></div>
<div class="a" style="left:172px;top:491px;width:798px;height:1px;background:#000000;"></div>
<div class="a" style="left:172px;top:505px;width:798px;height:1px;background:#000000;"></div>
<div class="a" style="left:172px;top:519px;width:798px;height:1px;background:#C6C3C6;"></div>
<div class="a" style="left:286px;top:470px;width:1px;height:36px;background:#000000;"></div>
<div class="a" style="left:286px;top:506px;width:1px;height:27px;background:#C6C3C6;"></div>
<div class="a" style="left:287px;top:471px;width:1px;height:6px;background:#FFFFFF;"></div>
<div class="a" style="left:401px;top:470px;width:1px;height:36px;background:#000000;"></div>
<div class="a" style="left:401px;top:506px;width:1px;height:27px;background:#C6C3C6;"></div>
<div class="a" style="left:402px;top:471px;width:1px;height:6px;background:#FFFFFF;"></div>
<div class="a" style="left:516px;top:470px;width:1px;height:36px;background:#000000;"></div>
<div class="a" style="left:516px;top:506px;width:1px;height:27px;background:#C6C3C6;"></div>
<div class="a" style="left:517px;top:471px;width:1px;height:6px;background:#FFFFFF;"></div>
<div class="a" style="left:631px;top:470px;width:1px;height:36px;background:#000000;"></div>
<div class="a" style="left:631px;top:506px;width:1px;height:27px;background:#C6C3C6;"></div>
<div class="a" style="left:632px;top:471px;width:1px;height:6px;background:#FFFFFF;"></div>
<div class="a" style="left:746px;top:470px;width:1px;height:36px;background:#000000;"></div>
<div class="a" style="left:746px;top:506px;width:1px;height:27px;background:#C6C3C6;"></div>
<div class="a" style="left:747px;top:471px;width:1px;height:6px;background:#FFFFFF;"></div>
<div class="a" style="left:861px;top:470px;width:1px;height:36px;background:#000000;"></div>
<div class="a" style="left:861px;top:506px;width:1px;height:27px;background:#C6C3C6;"></div>
<div class="a" style="left:862px;top:471px;width:1px;height:6px;background:#FFFFFF;"></div>
<div class="a" style="left:402px;top:470px;width:1px;height:63px;background:#848284;"></div>
<div class="a" style="left:401px;top:506px;width:1px;height:27px;background:#848284;"></div>
<div class="t" style="left:174px;top:479px;">Наименование под</div>
<div class="t" style="left:289px;top:479px;">Ответственное ли</div>
<div class="sb" style="left:386px;top:479px;width:15px;height:12px"><svg style="left:0;top:0" width="15" height="12"><rect x="5" y="5" width="5" height="1" fill="#000000"/><rect x="6" y="6" width="3" height="1" fill="#000000"/><rect x="7" y="7" width="1" height="1" fill="#000000"/></svg></div>
<div class="t" style="left:178px;top:507px;width:108px;overflow:hidden">Конструкторский от,</div>
<div class="a" style="left:175px;top:508px;width:1px;height:3px;background:#000000;"></div>
<div class="a" style="left:177px;top:508px;width:1px;height:3px;background:#000000;"></div>
<div class="t" style="left:293.5px;top:507px">Фуринов</div>
<div class="a" style="left:290px;top:508px;width:1px;height:3px;background:#000000;"></div>
<div class="a" style="left:292px;top:508px;width:1px;height:3px;background:#000000;"></div>
<div class="a" style="left:339px;top:508px;width:1px;height:3px;background:#000000;"></div>
<div class="a" style="left:341px;top:508px;width:1px;height:3px;background:#000000;"></div>
<div class="a track" style="left:970px;top:471px;width:16px;height:62px"></div>
<div class="sb" style="left:970px;top:471px"><svg style="left:0;top:0" width="16" height="16"><rect x="7" y="6" width="1" height="1" fill="#000000"/><rect x="6" y="7" width="3" height="1" fill="#000000"/><rect x="5" y="8" width="5" height="1" fill="#000000"/><rect x="4" y="9" width="7" height="1" fill="#000000"/></svg></div>
<div class="sb" style="left:970px;top:487px"><svg style="left:0;top:0" width="16" height="16"></svg></div>
<div class="sb" style="left:970px;top:517px"><svg style="left:0;top:0" width="16" height="16"><rect x="4" y="6" width="7" height="1" fill="#000000"/><rect x="5" y="7" width="5" height="1" fill="#000000"/><rect x="6" y="8" width="3" height="1" fill="#000000"/><rect x="7" y="9" width="1" height="1" fill="#000000"/></svg></div>
<div class="a track" style="left:172px;top:533px;width:798px;height:16px"></div>
<div class="sb" style="left:172px;top:533px"><svg style="left:0;top:0" width="16" height="16"><rect x="5" y="7" width="1" height="1" fill="#000000"/><rect x="6" y="6" width="1" height="3" fill="#000000"/><rect x="7" y="5" width="1" height="5" fill="#000000"/><rect x="8" y="4" width="1" height="7" fill="#000000"/></svg></div>
<div class="sb" style="left:188px;top:533px"><svg style="left:0;top:0" width="16" height="16"></svg></div>
<div class="sb" style="left:954px;top:533px"><svg style="left:0;top:0" width="16" height="16"><rect x="6" y="4" width="1" height="7" fill="#000000"/><rect x="7" y="5" width="1" height="5" fill="#000000"/><rect x="8" y="6" width="1" height="3" fill="#000000"/><rect x="9" y="7" width="1" height="1" fill="#000000"/></svg></div>
<div class="a" style="left:970px;top:533px;width:16px;height:16px;background:#D6D3CE;"></div>
<div class="a" style="left:0px;top:741px;width:1024px;height:1px;background:#FFFFFF;"></div>
<div class="a" style="left:9px;top:723px;width:741px;height:16px;box-shadow:inset 0 0 0 1px #E7DFDE"></div>
<div class="a" style="left:768px;top:723px;width:31px;height:16px;box-shadow:inset 0 0 0 1px #E7DFDE"></div>
<div class="a" style="left:802px;top:723px;width:25px;height:16px;box-shadow:inset 0 0 0 1px #E7DFDE"></div>
<div class="a" style="left:830px;top:723px;width:25px;height:16px;box-shadow:inset 0 0 0 1px #E7DFDE"></div>
<div class="a" style="left:858px;top:723px;width:30px;height:16px;box-shadow:inset 0 0 0 1px #E7DFDE"></div>
<div class="a" style="left:891px;top:723px;width:32px;height:16px;box-shadow:inset 0 0 0 1px #E7DFDE"></div>
<div class="a" style="left:926px;top:723px;width:26px;height:16px;box-shadow:inset 0 0 0 1px #E7DFDE"></div>
<div class="a" style="left:955px;top:723px;width:30px;height:16px;box-shadow:inset 0 0 0 1px #E7DFDE"></div>
<div class="a" style="left:987px;top:723px;width:29px;height:16px;box-shadow:inset 0 0 0 1px #E7DFDE"></div>
<div class="t" style="left:10px;top:725px;">Готово</div>
<div class="t" style="left:928px;top:725px;letter-spacing:-0.8px">NUM</div>
</body></html>
